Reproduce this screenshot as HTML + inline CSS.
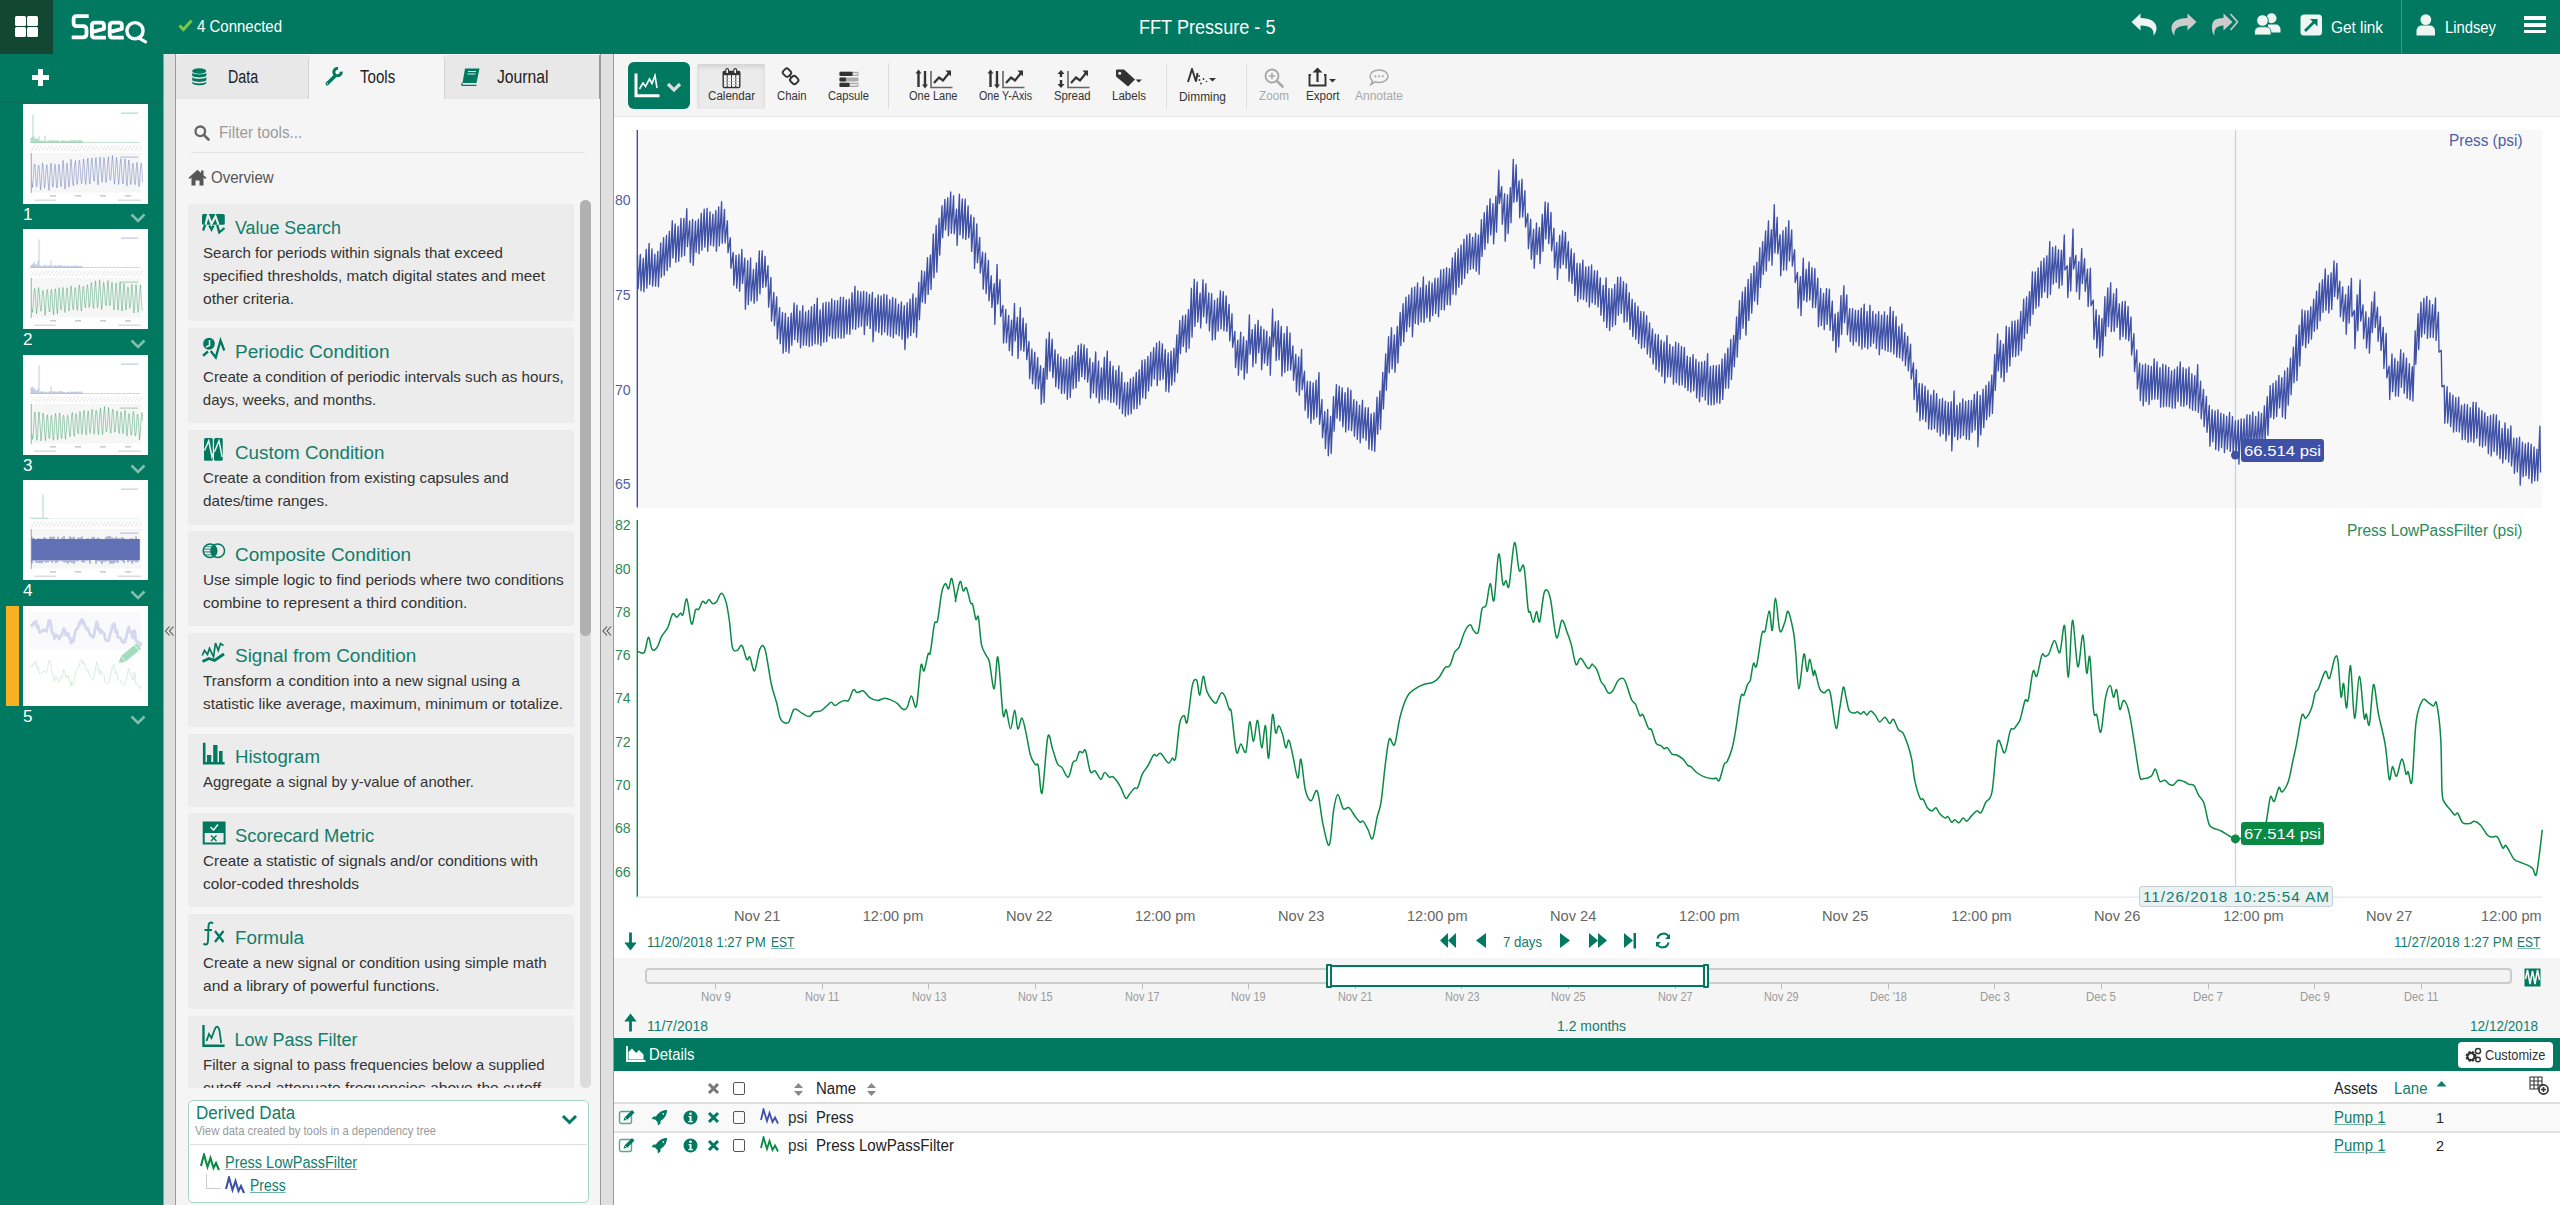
<!DOCTYPE html>
<html><head><meta charset="utf-8">
<style>
*{box-sizing:border-box;margin:0;padding:0}
html,body{width:2560px;height:1205px;overflow:hidden;background:#fff;font-family:"Liberation Sans",sans-serif;color:#333}
.a{position:absolute}
.t{position:absolute;white-space:pre;line-height:1}
</style></head><body>
<div class="a" style="left:0;top:0;width:2560px;height:54px;background:#007960"></div>
<div class="a" style="left:0;top:0;width:53px;height:53.5px;background:#124833"></div>
<div class="a" style="left:15px;top:16px;width:11px;height:9.5px;background:#fff;border-radius:1.5px"></div>
<div class="a" style="left:27px;top:16px;width:11px;height:9.5px;background:#fff;border-radius:1.5px"></div>
<div class="a" style="left:15px;top:27px;width:11px;height:9.5px;background:#fff;border-radius:1.5px"></div>
<div class="a" style="left:27px;top:27px;width:11px;height:9.5px;background:#fff;border-radius:1.5px"></div>
<svg class="a" style="left:60px;top:8px" width="100" height="40" viewBox="0 0 100 40">
<g fill="none" stroke="#fff" stroke-width="3.8" stroke-linejoin="round">
<path d="M28.7,8.2 H16.5 Q13.6,8.2 13.6,11.5 V15 Q13.6,18.2 16.8,18.2 H23.2 Q26.5,18.2 26.5,21.8 V25.8 Q26.5,29.4 23,29.4 H11.7" stroke-linejoin="miter"/>
<path d="M45.9,29.6 H34.6 Q31.9,29.6 31.9,26.8 V17.4 Q31.9,14.55 34.8,14.55 H41.3 Q44,14.55 44,17.3 V20.8 L32.5,23.8"/>
<path d="M63.75,29.6 H52.45 Q49.75,29.6 49.75,26.8 V17.4 Q49.75,14.55 52.65,14.55 H59.15 Q61.85,14.55 61.85,17.3 V20.8 L50.35,23.8"/>
</g>
<circle cx="75" cy="22.7" r="8.1" fill="none" stroke="#fff" stroke-width="3.4"/>
<path d="M77.5,16.8 A6,6 0 0 1 77.5,28.6" fill="none" stroke="#fff" stroke-width="0.9" stroke-opacity="0.8"/>
<path d="M78.5,29.8 L85.6,33.8" stroke="#fff" stroke-width="3.2" stroke-linecap="round"/>
</svg>
<svg class="a" style="left:178px;top:19px" width="15" height="13" viewBox="0 0 15 13"><path d="M1.5,6.5 L5.5,10.5 L13.5,1.5" fill="none" stroke="#7ac943" stroke-width="3"/></svg>
<div class="t" style="left:197.0px;top:18.7px;font-size:16px;color:#fff;transform:scaleX(0.9368);transform-origin:0 0;">4 Connected</div>
<div class="t" style="left:1138.8px;top:16.8px;font-size:20px;color:#fff;transform:scaleX(0.9053);transform-origin:0 0;">FFT Pressure - 5</div>
<svg class="a" style="left:2131px;top:13px" width="26" height="23" viewBox="0 0 26 23"><path d="M0.5,9 L9.5,0.5 V5 C19,5 25.5,8.5 25.5,15 C25.5,18.5 24,21 22.5,22.8 C23.5,16 19,12.5 9.5,12.5 V17.5 Z" fill="#eef5f3"/></svg>
<svg class="a" style="left:2171px;top:13px" width="26" height="23" viewBox="0 0 26 23"><g transform="translate(26,0) scale(-1,1)"><path d="M0.5,9 L9.5,0.5 V5 C19,5 25.5,8.5 25.5,15 C25.5,18.5 24,21 22.5,22.8 C23.5,16 19,12.5 9.5,12.5 V17.5 Z" fill="#cccccc"/></g></svg>
<svg class="a" style="left:2212px;top:13px" width="26" height="23" viewBox="0 0 26 23"><g transform="translate(21,0) scale(-1,1)"><path d="M0.5,9 L9.5,0.5 V5 C19,5 21,8.5 21,15 C21,18.5 20,21 18.5,22.8 C19.5,16 16,12.5 9.5,12.5 V17.5 Z" fill="#cccccc"/></g><path d="M18.5,1 L25.5,9 L18.5,17" fill="none" stroke="#cccccc" stroke-width="1.6"/></svg>
<svg class="a" style="left:2254px;top:13px" width="27" height="23" viewBox="0 0 27 23"><circle cx="17.5" cy="5.3" r="5" fill="#eef5f3"/><path d="M14,11.5 H22 C24.5,11.5 26.5,13.5 26.5,16.5 V19.5 H14 Z" fill="#eef5f3"/><circle cx="8.5" cy="7.5" r="5.8" stroke="#007960" stroke-width="1" fill="#eef5f3"/><path d="M0.5,22 V19 C0.5,15.5 3,13.8 6,13.8 H11.5 C14.5,13.8 17,15.5 17,19 V22 Z" fill="#eef5f3" stroke="#007960" stroke-width="0.8"/></svg>
<svg class="a" style="left:2300px;top:14px" width="23" height="22" viewBox="0 0 23 22"><rect x="0.5" y="0.5" width="21.5" height="21" rx="3.5" fill="#eef5f3"/><path d="M5,17 L15.5,6.5" stroke="#007960" stroke-width="2.6"/><path d="M10,5 H17.5 V12.5 Z" fill="#007960"/></svg>
<div class="t" style="left:2331.0px;top:20.0px;font-size:16px;color:#fff;transform:scaleX(0.9585);transform-origin:0 0;">Get link</div>
<div class="a" style="left:2401px;top:0;width:1px;height:54px;background:#3e9683"></div>
<svg class="a" style="left:2416px;top:14px" width="20" height="22" viewBox="0 0 20 22"><circle cx="9.8" cy="5.6" r="5.4" fill="#eef5f3"/><path d="M0.5,21.5 V17 C0.5,13.5 3,11.5 6,11.5 H13.5 C16.5,11.5 19,13.5 19,17 V21.5 Z" fill="#eef5f3"/></svg>
<div class="t" style="left:2445.0px;top:20.0px;font-size:16px;color:#fff;transform:scaleX(0.9246);transform-origin:0 0;">Lindsey</div>
<div class="a" style="left:2523.5px;top:16px;width:22px;height:3.7px;background:#fff"></div>
<div class="a" style="left:2523.5px;top:23px;width:22px;height:3.7px;background:#fff"></div>
<div class="a" style="left:2523.5px;top:29.8px;width:22px;height:3.7px;background:#fff"></div>
<div class="a" style="left:0;top:54px;width:163px;height:1151px;background:#007960"></div>
<div class="a" style="left:32px;top:75px;width:17px;height:4.5px;background:#fff"></div>
<div class="a" style="left:38.2px;top:69px;width:4.5px;height:17px;background:#fff"></div>
<div class="a" style="left:0;top:101.5px;width:163px;height:1px;background:#0a6b56"></div>
<svg class="a" style="left:23px;top:103.6px" width="125" height="100" viewBox="0 0 125 100"><rect width="125" height="100" fill="#fff"/><line x1="7" y1="38.5" x2="117" y2="38.5" stroke="#0a8a45" stroke-opacity="0.3" stroke-width="0.8"/><path d="M8,38.5 V33.8 M9,38.5 V33.5 M10,38.5 V10.5 M11,38.5 V32.3 M12,38.5 V35.3 M13,38.5 V34.1 M14,38.5 V34.1 M15,38.5 V35.7 M16,38.5 V32.2 M17,38.5 V36.7 M18,38.5 V36.4 M19,38.5 V36.5 M20,38.5 V37.4 M21,38.5 V36.4 M22,38.5 V31.5 M23,38.5 V37.0 M24,38.5 V37.5 M25,38.5 V36.2 M26,38.5 V36.8 M27,38.5 V36.4 M28,38.5 V36.2 M29,38.5 V36.4 M30,38.5 V36.1 M31,38.5 V36.9 M32,38.5 V36.3 M33,38.5 V36.8 M34,38.5 V36.1 M35,38.5 V36.2 M36,38.5 V37.4 M37,38.5 V37.3 M38,38.5 V37.2 M39,38.5 V36.1 M40,38.5 V36.8 M41,38.5 V36.6 M42,38.5 V37.0 M43,38.5 V36.7 M44,38.5 V36.9 M45,38.5 V37.0 M46,38.5 V36.6 M47,38.5 V36.6 M48,38.5 V36.1 M49,38.5 V36.5 M50,38.5 V36.1 M51,38.5 V36.2 M52,38.5 V36.0 M53,38.5 V36.5 M54,38.5 V37.3 M55,38.5 V36.2 M56,38.5 V36.1 M57,38.5 V36.1 M58,38.5 V36.6 M59,38.5 V36.4" stroke="#0a8a45" stroke-opacity="0.55" stroke-width="0.6"/><rect x="98" y="8.5" width="17" height="1.3" fill="#0a8a45" fill-opacity="0.3"/><path d="M8.0,47 L12.0,41.5 M11.7,47 L15.7,41.5 M15.4,47 L19.4,41.5 M19.1,47 L23.1,41.5 M22.8,47 L26.8,41.5 M26.5,47 L30.5,41.5 M30.2,47 L34.2,41.5 M33.9,47 L37.9,41.5 M37.6,47 L41.6,41.5 M41.3,47 L45.3,41.5 M45.0,47 L49.0,41.5 M48.7,47 L52.7,41.5 M52.4,47 L56.4,41.5 M56.1,47 L60.1,41.5 M59.8,47 L63.8,41.5 M63.5,47 L67.5,41.5 M67.2,47 L71.2,41.5 M70.9,47 L74.9,41.5 M74.6,47 L78.6,41.5 M78.3,47 L82.3,41.5 M82.0,47 L86.0,41.5 M85.7,47 L89.7,41.5 M89.4,47 L93.4,41.5 M93.1,47 L97.1,41.5 M96.8,47 L100.8,41.5 M100.5,47 L104.5,41.5 M104.2,47 L108.2,41.5 M107.9,47 L111.9,41.5 M111.6,47 L115.6,41.5 M115.3,47 L119.3,41.5" stroke="#c8c8c8" stroke-width="0.5"/><rect x="7" y="49" width="111" height="39.5" fill="#f6f6f6"/><line x1="8.3" y1="49" x2="8.3" y2="89" stroke="#3f51a6" stroke-opacity="0.6" stroke-width="0.8"/><path d="M9.0,78.8 9.5,83.5 10.0,77.6 10.5,71.7 11.0,62.0 11.5,60.3 12.0,60.2 12.5,70.0 13.0,77.8 13.5,82.8 14.0,81.9 14.5,72.4 15.0,64.5 15.5,61.3 16.0,61.7 16.5,68.5 17.0,77.7 17.5,85.8 18.0,82.1 18.5,75.2 19.0,65.5 19.5,58.9 20.0,61.0 20.5,67.5 21.0,77.9 21.5,84.1 22.0,80.7 22.5,77.0 23.0,67.0 23.5,62.4 24.0,60.7 24.5,68.1 25.0,76.3 25.5,81.3 26.0,86.3 26.5,78.1 27.0,69.5 27.5,62.6 28.0,59.1 28.5,64.9 29.0,73.4 29.5,82.4 30.0,83.0 30.5,79.5 31.0,71.1 31.5,64.4 32.0,60.2 32.5,64.4 33.0,72.6 33.5,82.3 34.0,84.0 34.5,78.8 35.0,70.6 35.5,61.5 36.0,60.2 36.5,63.2 37.0,71.5 37.5,79.9 38.0,82.7 38.5,80.2 39.0,70.8 39.5,64.3 40.0,56.4 40.5,59.9 41.0,71.2 41.5,79.2 42.0,85.0 42.5,79.7 43.0,71.6 43.5,63.9 44.0,59.1 44.5,63.6 45.0,72.1 45.5,82.4 46.0,83.1 46.5,80.1 47.0,70.2 47.5,61.5 48.0,55.3 48.5,60.7 49.0,67.8 49.5,77.4 50.0,80.4 50.5,82.0 51.0,72.5 51.5,61.2 52.0,59.3 52.5,56.6 53.0,65.2 53.5,73.9 54.0,80.5 54.5,78.3 55.0,74.5 55.5,65.5 56.0,56.7 56.5,56.1 57.0,60.8 57.5,69.3 58.0,76.4 58.5,79.7 59.0,77.8 59.5,70.4 60.0,62.3 60.5,55.0 61.0,58.1 61.5,65.1 62.0,74.0 62.5,80.6 63.0,79.2 63.5,70.5 64.0,62.3 64.5,56.2 65.0,54.0 65.5,63.7 66.0,72.7 66.5,77.9 67.0,80.1 67.5,72.4 68.0,61.3 68.5,55.3 69.0,53.9 69.5,60.8 70.0,67.6 70.5,75.1 71.0,77.3 71.5,77.0 72.0,66.9 72.5,55.8 73.0,53.4 73.5,60.1 74.0,68.3 74.5,75.0 75.0,80.8 75.5,73.6 76.0,66.1 76.5,59.0 77.0,53.0 77.5,56.9 78.0,64.4 78.5,72.1 79.0,78.3 79.5,75.5 80.0,67.1 80.5,57.1 81.0,53.5 81.5,56.4 82.0,64.5 82.5,75.1 83.0,78.6 83.5,77.3 84.0,69.2 84.5,60.5 85.0,55.5 85.5,52.6 86.0,60.7 86.5,71.3 87.0,76.2 87.5,76.1 88.0,73.3 88.5,65.2 89.0,56.6 89.5,51.5 90.0,56.9 90.5,66.6 91.0,75.5 91.5,80.2 92.0,74.5 92.5,66.0 93.0,59.2 93.5,53.3 94.0,57.1 94.5,66.6 95.0,74.0 95.5,80.6 96.0,78.8 96.5,70.1 97.0,60.3 97.5,57.4 98.0,54.7 98.5,63.6 99.0,71.7 99.5,77.9 100.0,80.0 100.5,74.3 101.0,64.9 101.5,59.3 102.0,54.9 102.5,59.8 103.0,70.8 103.5,78.8 104.0,82.0 104.5,75.6 105.0,66.4 105.5,56.9 106.0,55.9 106.5,63.3 107.0,71.9 107.5,80.6 108.0,79.8 108.5,76.9 109.0,66.8 109.5,60.3 110.0,59.1 110.5,62.2 111.0,72.5 111.5,79.8 112.0,80.8 112.5,78.8 113.0,68.6 113.5,61.4 114.0,58.4 114.5,63.8 115.0,71.9 115.5,79.4 116.0,82.5 116.5,80.3 117.0,72.0 117.5,64.5 118.0,60.4 118.5,59.2 119.0,67.8 119.5,78.2" fill="none" stroke="#3f51a6" stroke-opacity="0.55" stroke-width="0.7"/><rect x="97" y="52.5" width="18" height="1.3" fill="#3f51a6" fill-opacity="0.3"/><rect x="27" y="91" width="6" height="1.6" fill="#ccc"/><rect x="52" y="91" width="6" height="1.6" fill="#ccc"/><rect x="77" y="91" width="6" height="1.6" fill="#ccc"/><rect x="102" y="91" width="6" height="1.6" fill="#ccc"/><rect x="11" y="95.5" width="22" height="1.5" fill="#ddd"/><rect x="95" y="95.5" width="23" height="1.5" fill="#ddd"/></svg>
<div class="t" style="left:23.0px;top:206.6px;font-size:16px;color:#fff;transform:scaleX(1.0667);transform-origin:0 0;">1</div>
<svg class="a" style="left:130px;top:213.1px" width="16" height="10" viewBox="0 0 16 10"><path d="M1.5,1.5 L8,8 L14.5,1.5" fill="none" stroke="#7fbfae" stroke-width="2.6"/></svg>
<svg class="a" style="left:23px;top:229.15px" width="125" height="100" viewBox="0 0 125 100"><rect width="125" height="100" fill="#fff"/><line x1="7" y1="38.5" x2="117" y2="38.5" stroke="#3f51a6" stroke-opacity="0.3" stroke-width="0.8"/><path d="M8,38.5 V36.0 M9,38.5 V35.7 M10,38.5 V34.5 M11,38.5 V32.5 M12,38.5 V35.4 M13,38.5 V35.1 M14,38.5 V36.0 M15,38.5 V31.9 M16,38.5 V10.5 M17,38.5 V36.3 M18,38.5 V37.2 M19,38.5 V37.0 M20,38.5 V36.6 M21,38.5 V36.4 M22,38.5 V36.2 M23,38.5 V36.2 M24,38.5 V37.4 M25,38.5 V36.6 M26,38.5 V36.5 M27,38.5 V36.7 M28,38.5 V31.5 M29,38.5 V36.8 M30,38.5 V37.4 M31,38.5 V36.1 M32,38.5 V36.2 M33,38.5 V36.7 M34,38.5 V37.0 M35,38.5 V36.1 M36,38.5 V36.6 M37,38.5 V36.2 M38,38.5 V36.2 M39,38.5 V36.7 M40,38.5 V36.9 M41,38.5 V36.6 M42,38.5 V36.9 M43,38.5 V37.3 M44,38.5 V37.0 M45,38.5 V36.3 M46,38.5 V37.4 M47,38.5 V37.4 M48,38.5 V36.6 M49,38.5 V37.1 M50,38.5 V36.7 M51,38.5 V36.8 M52,38.5 V37.0 M53,38.5 V36.0 M54,38.5 V37.2 M55,38.5 V36.9 M56,38.5 V37.2 M57,38.5 V36.6 M58,38.5 V37.1 M59,38.5 V37.0" stroke="#3f51a6" stroke-opacity="0.55" stroke-width="0.6"/><rect x="98" y="8.5" width="17" height="1.3" fill="#3f51a6" fill-opacity="0.3"/><path d="M8.0,47 L12.0,41.5 M11.7,47 L15.7,41.5 M15.4,47 L19.4,41.5 M19.1,47 L23.1,41.5 M22.8,47 L26.8,41.5 M26.5,47 L30.5,41.5 M30.2,47 L34.2,41.5 M33.9,47 L37.9,41.5 M37.6,47 L41.6,41.5 M41.3,47 L45.3,41.5 M45.0,47 L49.0,41.5 M48.7,47 L52.7,41.5 M52.4,47 L56.4,41.5 M56.1,47 L60.1,41.5 M59.8,47 L63.8,41.5 M63.5,47 L67.5,41.5 M67.2,47 L71.2,41.5 M70.9,47 L74.9,41.5 M74.6,47 L78.6,41.5 M78.3,47 L82.3,41.5 M82.0,47 L86.0,41.5 M85.7,47 L89.7,41.5 M89.4,47 L93.4,41.5 M93.1,47 L97.1,41.5 M96.8,47 L100.8,41.5 M100.5,47 L104.5,41.5 M104.2,47 L108.2,41.5 M107.9,47 L111.9,41.5 M111.6,47 L115.6,41.5 M115.3,47 L119.3,41.5" stroke="#c8c8c8" stroke-width="0.5"/><rect x="7" y="49" width="111" height="39.5" fill="#f6f6f6"/><line x1="8.3" y1="49" x2="8.3" y2="89" stroke="#0a8a45" stroke-opacity="0.6" stroke-width="0.8"/><path d="M9.0,79.6 9.5,83.4 10.0,78.8 10.5,71.5 11.0,63.0 11.5,59.6 12.0,59.7 12.5,67.2 13.0,78.5 13.5,84.9 14.0,81.3 14.5,75.8 15.0,64.8 15.5,58.4 16.0,61.2 16.5,66.6 17.0,75.2 17.5,79.5 18.0,82.3 18.5,79.1 19.0,69.6 19.5,62.2 20.0,61.5 20.5,64.2 21.0,70.7 21.5,78.9 22.0,86.2 22.5,82.8 23.0,73.8 23.5,65.5 24.0,60.7 24.5,60.6 25.0,66.6 25.5,75.4 26.0,81.4 26.5,83.0 27.0,82.0 27.5,71.0 28.0,61.4 28.5,60.4 29.0,65.9 29.5,75.9 30.0,80.7 30.5,85.7 31.0,79.7 31.5,68.3 32.0,60.0 32.5,59.9 33.0,65.2 33.5,76.8 34.0,81.5 34.5,84.9 35.0,74.2 35.5,65.4 36.0,58.8 36.5,62.1 37.0,68.5 37.5,78.0 38.0,81.1 38.5,79.5 39.0,72.5 39.5,61.9 40.0,58.4 40.5,63.6 41.0,72.3 41.5,81.5 42.0,83.5 42.5,78.3 43.0,70.5 43.5,62.2 44.0,58.8 44.5,60.2 45.0,68.8 45.5,76.8 46.0,82.1 46.5,79.5 47.0,71.0 47.5,64.0 48.0,56.9 48.5,59.8 49.0,68.4 49.5,76.8 50.0,80.5 50.5,80.8 51.0,72.6 51.5,62.9 52.0,59.1 52.5,58.6 53.0,64.5 53.5,72.9 54.0,80.6 54.5,81.5 55.0,73.7 55.5,65.4 56.0,56.2 56.5,56.1 57.0,62.1 57.5,71.9 58.0,80.2 58.5,82.1 59.0,75.2 59.5,65.3 60.0,57.6 60.5,57.2 61.0,61.8 61.5,70.6 62.0,77.9 62.5,78.8 63.0,72.8 63.5,65.2 64.0,57.1 64.5,55.7 65.0,60.3 65.5,68.4 66.0,78.5 66.5,77.5 67.0,74.0 67.5,63.6 68.0,55.1 68.5,53.5 69.0,58.4 69.5,67.6 70.0,77.2 70.5,79.4 71.0,75.6 71.5,66.6 72.0,56.3 72.5,51.8 73.0,58.6 73.5,66.8 74.0,73.0 74.5,78.9 75.0,76.0 75.5,66.9 76.0,59.9 76.5,51.2 77.0,55.0 77.5,63.9 78.0,71.6 78.5,80.4 79.0,78.3 79.5,70.0 80.0,61.3 80.5,53.4 81.0,54.4 81.5,61.9 82.0,69.3 82.5,74.7 83.0,76.6 83.5,76.0 84.0,64.9 84.5,55.5 85.0,51.6 85.5,58.2 86.0,68.8 86.5,76.7 87.0,76.7 87.5,74.0 88.0,64.3 88.5,57.3 89.0,53.3 89.5,59.6 90.0,66.9 90.5,75.7 91.0,81.1 91.5,75.2 92.0,69.7 92.5,60.2 93.0,54.0 93.5,54.8 94.0,64.8 94.5,75.0 95.0,81.2 95.5,78.3 96.0,69.6 96.5,60.6 97.0,53.1 97.5,59.2 98.0,66.5 98.5,75.4 99.0,82.0 99.5,76.7 100.0,68.1 100.5,57.7 101.0,54.5 101.5,60.1 102.0,68.0 102.5,77.5 103.0,81.1 103.5,77.3 104.0,69.3 104.5,58.8 105.0,58.1 105.5,59.0 106.0,69.7 106.5,79.0 107.0,79.0 107.5,75.5 108.0,68.6 108.5,58.2 109.0,55.3 109.5,61.3 110.0,69.5 110.5,80.5 111.0,84.0 111.5,79.2 112.0,70.2 112.5,63.5 113.0,55.7 113.5,61.8 114.0,70.0 114.5,79.5 115.0,83.3 115.5,81.5 116.0,74.5 116.5,65.9 117.0,59.1 117.5,55.9 118.0,63.7 118.5,71.7 119.0,81.5 119.5,81.6" fill="none" stroke="#0a8a45" stroke-opacity="0.55" stroke-width="0.7"/><rect x="97" y="52.5" width="18" height="1.3" fill="#0a8a45" fill-opacity="0.3"/><rect x="27" y="91" width="6" height="1.6" fill="#ccc"/><rect x="52" y="91" width="6" height="1.6" fill="#ccc"/><rect x="77" y="91" width="6" height="1.6" fill="#ccc"/><rect x="102" y="91" width="6" height="1.6" fill="#ccc"/><rect x="11" y="95.5" width="22" height="1.5" fill="#ddd"/><rect x="95" y="95.5" width="23" height="1.5" fill="#ddd"/></svg>
<div class="t" style="left:23.0px;top:332.1px;font-size:16px;color:#fff;transform:scaleX(1.0667);transform-origin:0 0;">2</div>
<svg class="a" style="left:130px;top:338.65px" width="16" height="10" viewBox="0 0 16 10"><path d="M1.5,1.5 L8,8 L14.5,1.5" fill="none" stroke="#7fbfae" stroke-width="2.6"/></svg>
<svg class="a" style="left:23px;top:354.7px" width="125" height="100" viewBox="0 0 125 100"><rect width="125" height="100" fill="#fff"/><line x1="7" y1="38.5" x2="117" y2="38.5" stroke="#3f51a6" stroke-opacity="0.3" stroke-width="0.8"/><path d="M8,38.5 V32.8 M9,38.5 V31.8 M10,38.5 V31.9 M11,38.5 V34.2 M12,38.5 V33.3 M13,38.5 V35.9 M14,38.5 V35.3 M15,38.5 V33.6 M16,38.5 V10.5 M17,38.5 V37.1 M18,38.5 V36.1 M19,38.5 V36.4 M20,38.5 V37.3 M21,38.5 V36.3 M22,38.5 V37.3 M23,38.5 V36.6 M24,38.5 V37.3 M25,38.5 V37.5 M26,38.5 V36.2 M27,38.5 V37.2 M28,38.5 V31.5 M29,38.5 V36.0 M30,38.5 V36.2 M31,38.5 V37.1 M32,38.5 V36.1 M33,38.5 V36.7 M34,38.5 V36.5 M35,38.5 V37.2 M36,38.5 V36.1 M37,38.5 V36.5 M38,38.5 V36.1 M39,38.5 V36.2 M40,38.5 V37.1 M41,38.5 V37.0 M42,38.5 V37.3 M43,38.5 V37.3 M44,38.5 V37.4 M45,38.5 V37.0 M46,38.5 V36.6 M47,38.5 V37.5 M48,38.5 V36.5 M49,38.5 V37.0 M50,38.5 V37.0 M51,38.5 V36.3 M52,38.5 V36.8 M53,38.5 V37.0 M54,38.5 V36.8 M55,38.5 V36.4 M56,38.5 V37.4 M57,38.5 V36.0 M58,38.5 V37.5 M59,38.5 V36.4" stroke="#3f51a6" stroke-opacity="0.55" stroke-width="0.6"/><rect x="98" y="8.5" width="17" height="1.3" fill="#3f51a6" fill-opacity="0.3"/><path d="M8.0,47 L12.0,41.5 M11.7,47 L15.7,41.5 M15.4,47 L19.4,41.5 M19.1,47 L23.1,41.5 M22.8,47 L26.8,41.5 M26.5,47 L30.5,41.5 M30.2,47 L34.2,41.5 M33.9,47 L37.9,41.5 M37.6,47 L41.6,41.5 M41.3,47 L45.3,41.5 M45.0,47 L49.0,41.5 M48.7,47 L52.7,41.5 M52.4,47 L56.4,41.5 M56.1,47 L60.1,41.5 M59.8,47 L63.8,41.5 M63.5,47 L67.5,41.5 M67.2,47 L71.2,41.5 M70.9,47 L74.9,41.5 M74.6,47 L78.6,41.5 M78.3,47 L82.3,41.5 M82.0,47 L86.0,41.5 M85.7,47 L89.7,41.5 M89.4,47 L93.4,41.5 M93.1,47 L97.1,41.5 M96.8,47 L100.8,41.5 M100.5,47 L104.5,41.5 M104.2,47 L108.2,41.5 M107.9,47 L111.9,41.5 M111.6,47 L115.6,41.5 M115.3,47 L119.3,41.5" stroke="#c8c8c8" stroke-width="0.5"/><rect x="7" y="49" width="111" height="39.5" fill="#f6f6f6"/><line x1="8.3" y1="49" x2="8.3" y2="89" stroke="#0a8a45" stroke-opacity="0.6" stroke-width="0.8"/><path d="M9.0,79.2 9.5,84.3 10.0,82.1 10.5,74.8 11.0,66.6 11.5,58.3 12.0,57.0 12.5,65.6 13.0,73.8 13.5,82.9 14.0,85.4 14.5,81.6 15.0,71.2 15.5,61.5 16.0,56.8 16.5,62.4 17.0,69.0 17.5,77.4 18.0,85.9 18.5,80.3 19.0,74.9 19.5,66.0 20.0,58.2 20.5,60.6 21.0,64.5 21.5,75.7 22.0,81.6 22.5,85.7 23.0,79.0 23.5,70.1 24.0,61.1 24.5,59.9 25.0,65.0 25.5,75.0 26.0,83.6 26.5,83.3 27.0,78.5 27.5,68.7 28.0,61.0 28.5,60.3 29.0,65.1 29.5,73.2 30.0,83.0 30.5,85.2 31.0,80.7 31.5,71.5 32.0,62.5 32.5,58.4 33.0,61.6 33.5,70.3 34.0,78.9 34.5,84.7 35.0,83.4 35.5,75.1 36.0,64.5 36.5,57.9 37.0,59.6 37.5,69.8 38.0,80.4 38.5,83.6 39.0,82.6 39.5,72.7 40.0,62.4 40.5,60.2 41.0,61.7 41.5,70.8 42.0,80.7 42.5,84.3 43.0,79.5 43.5,73.9 44.0,63.6 44.5,60.6 45.0,60.2 45.5,65.8 46.0,73.0 46.5,78.8 47.0,81.7 47.5,77.7 48.0,69.7 48.5,61.8 49.0,57.9 49.5,57.8 50.0,67.6 50.5,75.2 51.0,80.9 51.5,81.3 52.0,70.5 52.5,61.3 53.0,58.5 53.5,59.4 54.0,68.0 54.5,77.2 55.0,78.7 55.5,78.5 56.0,69.4 56.5,59.6 57.0,56.5 57.5,59.3 58.0,67.8 58.5,78.1 59.0,79.3 59.5,76.6 60.0,66.5 60.5,58.6 61.0,55.3 61.5,57.6 62.0,67.0 62.5,75.6 63.0,79.7 63.5,79.6 64.0,70.3 64.5,61.0 65.0,55.8 65.5,57.0 66.0,65.4 66.5,73.8 67.0,78.3 67.5,76.3 68.0,69.1 68.5,59.7 69.0,54.2 69.5,56.6 70.0,63.1 70.5,71.6 71.0,79.2 71.5,78.2 72.0,71.4 72.5,61.4 73.0,55.2 73.5,55.9 74.0,58.6 74.5,69.6 75.0,76.1 75.5,79.6 76.0,71.7 76.5,63.4 77.0,57.0 77.5,53.3 78.0,59.3 78.5,67.8 79.0,75.4 79.5,79.6 80.0,75.3 80.5,64.2 81.0,56.8 81.5,51.6 82.0,59.7 82.5,66.8 83.0,75.4 83.5,76.9 84.0,73.9 84.5,68.5 85.0,60.5 85.5,52.6 86.0,57.5 86.5,64.3 87.0,74.3 87.5,77.9 88.0,78.3 88.5,70.5 89.0,60.0 89.5,54.4 90.0,54.3 90.5,60.0 91.0,68.8 91.5,76.8 92.0,77.2 92.5,74.5 93.0,66.2 93.5,59.0 94.0,55.8 94.5,58.8 95.0,66.1 95.5,74.8 96.0,77.9 96.5,78.4 97.0,68.4 97.5,58.4 98.0,56.8 98.5,58.4 99.0,66.4 99.5,74.7 100.0,78.5 100.5,77.7 101.0,67.8 101.5,59.0 102.0,55.3 102.5,59.3 103.0,66.9 103.5,75.1 104.0,80.9 104.5,76.1 105.0,69.4 105.5,60.9 106.0,58.5 106.5,59.8 107.0,67.2 107.5,74.8 108.0,80.0 108.5,79.9 109.0,75.7 109.5,66.6 110.0,57.1 110.5,56.5 111.0,60.3 111.5,70.1 112.0,79.9 112.5,80.8 113.0,78.0 113.5,71.7 114.0,62.1 114.5,59.1 115.0,60.9 115.5,66.6 116.0,76.1 116.5,84.8 117.0,80.6 117.5,73.6 118.0,64.7 118.5,61.2 119.0,57.4 119.5,65.8" fill="none" stroke="#0a8a45" stroke-opacity="0.55" stroke-width="0.7"/><rect x="97" y="52.5" width="18" height="1.3" fill="#0a8a45" fill-opacity="0.3"/><rect x="27" y="91" width="6" height="1.6" fill="#ccc"/><rect x="52" y="91" width="6" height="1.6" fill="#ccc"/><rect x="77" y="91" width="6" height="1.6" fill="#ccc"/><rect x="102" y="91" width="6" height="1.6" fill="#ccc"/><rect x="11" y="95.5" width="22" height="1.5" fill="#ddd"/><rect x="95" y="95.5" width="23" height="1.5" fill="#ddd"/></svg>
<div class="t" style="left:23.0px;top:457.7px;font-size:16px;color:#fff;transform:scaleX(1.0667);transform-origin:0 0;">3</div>
<svg class="a" style="left:130px;top:464.2px" width="16" height="10" viewBox="0 0 16 10"><path d="M1.5,1.5 L8,8 L14.5,1.5" fill="none" stroke="#7fbfae" stroke-width="2.6"/></svg>
<svg class="a" style="left:23px;top:480.25px" width="125" height="100" viewBox="0 0 125 100"><rect width="125" height="100" fill="#fff"/><line x1="7" y1="38.5" x2="117" y2="38.5" stroke="#0a8a45" stroke-opacity="0.12" stroke-width="0.8"/><path d="M8,38.5 V37.7 M9,38.5 V37.7 M10,38.5 V37.7 M11,38.5 V37.7 M12,38.5 V37.7 M13,38.5 V37.7 M14,38.5 V37.7 M15,38.5 V37.7 M16,38.5 V37.7 M17,38.5 V37.7 M18,38.5 V37.7 M19,38.5 V37.7 M20,38.5 V14.5 M21,38.5 V37.7 M22,38.5 V37.7 M23,38.5 V37.7 M24,38.5 V37.7 M25,38.5 V37.7" stroke="#0a8a45" stroke-opacity="0.55" stroke-width="0.6"/><rect x="98" y="8.5" width="17" height="1.3" fill="#0a8a45" fill-opacity="0.3"/><path d="M8.0,47 L12.0,41.5 M11.7,47 L15.7,41.5 M15.4,47 L19.4,41.5 M19.1,47 L23.1,41.5 M22.8,47 L26.8,41.5 M26.5,47 L30.5,41.5 M30.2,47 L34.2,41.5 M33.9,47 L37.9,41.5 M37.6,47 L41.6,41.5 M41.3,47 L45.3,41.5 M45.0,47 L49.0,41.5 M48.7,47 L52.7,41.5 M52.4,47 L56.4,41.5 M56.1,47 L60.1,41.5 M59.8,47 L63.8,41.5 M63.5,47 L67.5,41.5 M67.2,47 L71.2,41.5 M70.9,47 L74.9,41.5 M74.6,47 L78.6,41.5 M78.3,47 L82.3,41.5 M82.0,47 L86.0,41.5 M85.7,47 L89.7,41.5 M89.4,47 L93.4,41.5 M93.1,47 L97.1,41.5 M96.8,47 L100.8,41.5 M100.5,47 L104.5,41.5 M104.2,47 L108.2,41.5 M107.9,47 L111.9,41.5 M111.6,47 L115.6,41.5 M115.3,47 L119.3,41.5" stroke="#c8c8c8" stroke-width="0.5"/><rect x="7" y="49" width="111" height="39.5" fill="#f6f6f6"/><line x1="8.3" y1="49" x2="8.3" y2="89" stroke="#3f51a6" stroke-opacity="0.6" stroke-width="0.8"/><rect x="9" y="59" width="108" height="21" fill="#3f51a6" fill-opacity="0.68"/><path d="M9,56.8 V83.3 M11,58.1 V81.0 M13,60.0 V82.7 M15,58.1 V83.0 M17,58.5 V83.1 M19,58.9 V83.2 M21,57.1 V81.7 M23,57.8 V82.7 M25,59.2 V82.2 M27,56.8 V81.1 M29,56.8 V82.7 M31,56.6 V81.3 M33,59.6 V83.2 M35,56.8 V81.8 M37,59.6 V80.8 M39,57.5 V81.2 M41,56.2 V82.4 M43,59.2 V82.6 M45,58.6 V83.7 M47,56.4 V82.1 M49,57.4 V82.8 M51,56.8 V83.9 M53,59.9 V81.4 M55,57.6 V81.2 M57,57.6 V80.4 M59,56.5 V82.1 M61,59.5 V82.7 M63,58.8 V80.8 M65,58.1 V80.6 M67,59.2 V83.5 M69,57.2 V80.1 M71,56.9 V80.1 M73,58.7 V83.6 M75,57.5 V81.2 M77,58.5 V81.6 M79,59.5 V84.0 M81,59.8 V81.7 M83,57.0 V81.6 M85,56.1 V81.0 M87,56.1 V83.6 M89,57.3 V83.6 M91,58.2 V83.3 M93,56.8 V82.1 M95,58.1 V82.8 M97,58.4 V80.3 M99,57.0 V81.1 M101,58.0 V83.1 M103,59.3 V80.1 M105,59.5 V82.4 M107,58.6 V81.0 M109,58.2 V83.7 M111,59.0 V81.6 M113,56.5 V82.4 M115,58.9 V81.9" stroke="#3f51a6" stroke-width="0.8"/><rect x="97" y="52.5" width="18" height="1.3" fill="#3f51a6" fill-opacity="0.3"/><rect x="27" y="91" width="6" height="1.6" fill="#ccc"/><rect x="52" y="91" width="6" height="1.6" fill="#ccc"/><rect x="77" y="91" width="6" height="1.6" fill="#ccc"/><rect x="102" y="91" width="6" height="1.6" fill="#ccc"/><rect x="11" y="95.5" width="22" height="1.5" fill="#ddd"/><rect x="95" y="95.5" width="23" height="1.5" fill="#ddd"/></svg>
<div class="t" style="left:23.0px;top:583.2px;font-size:16px;color:#fff;transform:scaleX(1.0667);transform-origin:0 0;">4</div>
<svg class="a" style="left:130px;top:589.75px" width="16" height="10" viewBox="0 0 16 10"><path d="M1.5,1.5 L8,8 L14.5,1.5" fill="none" stroke="#7fbfae" stroke-width="2.6"/></svg>
<svg class="a" style="left:23px;top:605.8px" width="125" height="100" viewBox="0 0 125 100"><rect width="125" height="100" fill="#fff"/><rect x="7" y="6" width="111" height="38" fill="#fafafc"/><path d="M8.0,20.2 8.7,19.1 9.1,20.0 9.8,18.2 10.3,17.3 10.7,17.1 11.1,17.9 11.6,16.6 12.0,16.1 12.4,16.1 12.9,15.2 13.3,17.6 13.8,20.2 14.3,21.0 14.8,22.0 15.4,20.1 16.1,24.8 16.7,26.5 17.5,25.7 18.3,25.6 19.0,25.0 19.4,25.0 20.0,24.6 20.5,23.6 21.1,23.8 21.9,24.6 22.7,24.6 23.4,25.4 23.8,24.2 24.4,21.5 24.8,20.5 25.2,17.9 25.6,15.1 26.0,14.8 26.4,15.7 26.7,14.2 27.0,14.7 27.4,16.2 27.7,17.3 28.2,20.7 28.6,23.6 29.1,25.8 29.6,27.1 30.0,27.1 30.4,27.3 31.0,30.2 31.4,32.7 32.0,28.8 32.5,30.5 33.2,30.0 33.5,29.1 33.9,29.0 34.5,30.7 35.0,30.9 35.5,31.3 36.2,33.1 36.7,32.3 37.2,31.0 37.8,29.4 38.2,29.2 38.9,29.6 39.3,26.6 39.8,26.5 40.3,22.8 40.7,22.5 41.4,24.8 41.7,23.9 42.2,25.4 42.6,29.1 43.2,29.1 43.6,28.2 44.1,28.7 44.5,29.6 44.9,27.4 45.3,27.6 45.6,28.1 46.2,31.4 46.6,32.4 47.3,32.5 48.0,37.2 48.5,32.8 49.1,34.0 49.7,35.2 50.2,35.8 50.7,34.7 51.2,30.3 51.7,28.4 52.5,24.2 53.4,23.2 54.3,22.6 54.9,21.5 55.5,19.9 56.1,18.0 56.6,18.6 57.0,16.2 57.5,15.8 58.0,14.4 58.4,14.5 58.9,13.2 59.5,16.5 59.8,17.8 60.1,17.7 60.7,15.6 61.4,17.6 61.9,19.7 62.5,20.9 63.1,21.4 63.4,21.9 63.8,23.3 64.3,23.8 64.9,22.6 65.4,24.5 65.9,25.9 66.4,27.0 66.9,28.3 67.3,28.8 67.8,29.3 68.4,29.7 68.9,30.4 69.7,31.3 70.3,31.4 70.8,30.2 71.2,28.8 71.7,24.2 72.1,23.1 72.5,21.4 73.0,18.7 73.4,16.7 73.7,15.6 74.3,17.7 74.8,18.6 75.1,23.6 75.6,22.0 75.9,22.4 76.3,23.6 76.7,23.7 77.2,27.0 77.7,23.4 78.0,25.5 78.5,25.6 78.8,25.6 79.2,25.5 79.8,26.5 80.3,26.6 80.8,27.1 81.4,28.5 81.8,31.6 82.3,33.2 82.8,34.2 83.2,34.5 83.7,34.7 84.1,35.0 84.6,34.9 85.1,34.7 85.6,34.4 86.2,32.6 87.0,29.2 87.5,27.1 87.9,26.2 88.3,24.5 88.8,22.5 89.3,20.7 89.8,19.3 90.4,18.0 90.9,17.6 91.5,18.9 91.9,20.8 92.3,25.9 92.8,24.3 93.3,24.3 93.6,25.4 94.2,25.7 94.8,31.2 95.4,31.2 95.9,31.6 96.5,31.9 97.0,31.6 97.6,31.9 98.2,32.9 98.8,35.4 99.4,36.0 100.3,36.7 101.8,36.0 102.3,33.0 102.8,32.2 103.4,31.6 103.8,28.5 104.4,26.1 104.9,23.9 105.5,22.0 106.0,20.9 106.4,24.2 106.7,25.2 107.2,26.1 107.7,26.0 108.0,26.7 108.5,25.7 109.2,31.5 109.6,31.2 110.1,31.0 110.5,31.6 111.1,24.6 111.7,25.1 112.2,27.8 112.4,33.5 113.0,34.6 113.4,35.3 114.1,35.2 114.8,36.3 115.4,36.5 115.9,37.3 116.7,38.7 117.5,39.3 118.0,35.9" fill="none" stroke="#d5d8ee" stroke-width="2.8" stroke-linejoin="round"/><path d="M8.0,61.1 8.7,59.7 9.1,60.8 9.8,58.7 10.3,57.7 10.7,57.5 11.1,58.4 11.6,56.9 12.0,56.4 12.4,56.4 12.9,55.3 13.3,58.1 13.8,61.0 14.3,61.9 14.8,63.1 15.4,60.9 16.1,66.3 16.7,68.3 17.5,67.3 18.3,67.2 19.0,66.5 19.4,66.5 20.0,66.0 20.5,65.0 21.1,65.1 21.9,66.0 22.7,66.0 23.4,66.9 23.8,65.6 24.4,62.6 24.8,61.4 25.2,58.4 25.6,55.3 26.0,54.9 26.4,55.9 26.7,54.2 27.0,54.8 27.4,56.5 27.7,57.7 28.2,61.6 28.6,64.9 29.1,67.4 29.6,68.9 30.0,68.9 30.4,69.1 31.0,72.4 31.4,75.3 32.0,70.9 32.5,72.8 33.2,72.2 33.5,71.2 33.9,71.1 34.5,73.1 35.0,73.2 35.5,73.7 36.2,75.8 36.7,74.8 37.2,73.4 37.8,71.5 38.2,71.3 38.9,71.8 39.3,68.3 39.8,68.2 40.3,64.0 40.7,63.6 41.4,66.3 41.7,65.3 42.2,66.9 42.6,71.2 43.2,71.2 43.6,70.1 44.1,70.8 44.5,71.8 44.9,69.3 45.3,69.5 45.6,70.0 46.2,73.8 46.6,75.0 47.3,75.1 48.0,80.5 48.5,75.4 49.1,76.8 49.7,78.2 50.2,78.9 50.7,77.7 51.2,72.6 51.7,70.5 52.5,65.7 53.4,64.5 54.3,63.8 54.9,62.6 55.5,60.7 56.1,58.5 56.6,59.2 57.0,56.5 57.5,56.0 58.0,54.4 58.4,54.6 58.9,53.0 59.5,56.8 59.8,58.3 60.1,58.2 60.7,55.7 61.4,58.0 61.9,60.5 62.5,61.8 63.1,62.4 63.4,63.0 63.8,64.6 64.3,65.1 64.9,63.8 65.4,66.0 65.9,67.6 66.4,68.8 66.9,70.3 67.3,70.9 67.8,71.4 68.4,71.9 68.9,72.7 69.7,73.7 70.3,73.8 70.8,72.4 71.2,70.9 71.7,65.7 72.1,64.4 72.5,62.4 73.0,59.4 73.4,57.1 73.7,55.8 74.3,58.2 74.8,59.2 75.1,64.9 75.6,63.1 75.9,63.5 76.3,64.9 76.7,65.0 77.2,68.8 77.7,64.7 78.0,67.1 78.5,67.2 78.8,67.2 79.2,67.1 79.8,68.2 80.3,68.3 80.8,69.0 81.4,70.6 81.8,74.1 82.3,75.9 82.8,77.1 83.2,77.4 83.7,77.7 84.1,78.0 84.6,77.8 85.1,77.6 85.6,77.3 86.2,75.2 87.0,71.3 87.5,68.9 87.9,67.9 88.3,66.0 88.8,63.6 89.3,61.6 89.8,60.1 90.4,58.6 90.9,58.0 91.5,59.5 91.9,61.7 92.3,67.5 92.8,65.7 93.3,65.7 93.6,66.9 94.2,67.3 94.8,73.6 95.4,73.6 95.9,74.1 96.5,74.4 97.0,74.0 97.6,74.4 98.2,75.5 98.8,78.4 99.4,79.1 100.3,79.9 101.8,79.1 102.3,75.7 102.8,74.8 103.4,74.1 103.8,70.6 104.4,67.8 104.9,65.3 105.5,63.1 106.0,61.8 106.4,65.7 106.7,66.8 107.2,67.8 107.7,67.7 108.0,68.4 108.5,67.3 109.2,73.9 109.6,73.6 110.1,73.4 110.5,74.1 111.1,66.0 111.7,66.6 112.2,69.8 112.4,76.2 113.0,77.5 113.4,78.3 114.1,78.1 114.8,79.5 115.4,79.7 115.9,80.6 116.7,82.2 117.5,82.9 118.0,79.0" fill="none" stroke="#d3ebdc" stroke-width="0.9"/><g transform="translate(105,49) rotate(50)"><rect x="-3.6" y="-11" width="7.2" height="17" fill="#a3dbbd"/><path d="M-3.6,6.5 L0,12 L3.6,6.5 Z" fill="#a3dbbd"/><rect x="-3.6" y="-14" width="7.2" height="2.4" fill="#a3dbbd"/></g></svg>
<div class="t" style="left:23.0px;top:708.8px;font-size:16px;color:#fff;transform:scaleX(1.0667);transform-origin:0 0;">5</div>
<svg class="a" style="left:130px;top:715.3px" width="16" height="10" viewBox="0 0 16 10"><path d="M1.5,1.5 L8,8 L14.5,1.5" fill="none" stroke="#7fbfae" stroke-width="2.6"/></svg>
<div class="a" style="left:6px;top:606px;width:13px;height:99.5px;background:#f9b122"></div>
<div class="a" style="left:163px;top:54px;width:13px;height:1151px;background:#e0e0e0;border-left:1px solid #9a9a9a;border-right:1px solid #9a9a9a"></div>
<svg class="a" style="left:164px;top:625px" width="11" height="12" viewBox="0 0 11 12"><path d="M5.5,1.5 L1.5,6 L5.5,10.5 M9.5,1.5 L5.5,6 L9.5,10.5" fill="none" stroke="#555" stroke-width="1.1"/></svg>
<div class="a" style="left:176px;top:54px;width:424px;height:1151px;background:#f5f5f5"></div>
<div class="a" style="left:176px;top:55px;width:133px;height:43.5px;background:#e8e8e8;border-top-left-radius:4px"></div>
<div class="a" style="left:445px;top:55px;width:155px;height:43.5px;background:#e8e8e8;border-top-right-radius:3px"></div>
<svg class="a" style="left:192px;top:68px" width="15" height="18" viewBox="0 0 15 18"><ellipse cx="7.2" cy="3" rx="7" ry="2.8" fill="#007960"/><path d="M0.2,4.5 C1,7 13.5,7 14.3,4.5 V7.5 C13.5,10 1,10 0.2,7.5 Z M0.2,9 C1,11.5 13.5,11.5 14.3,9 V12 C13.5,14.5 1,14.5 0.2,12 Z M0.2,13.5 C1,16 13.5,16 14.3,13.5 V15 C13.5,18 1,18 0.2,15 Z" fill="#007960"/></svg>
<div class="t" style="left:227.6px;top:67.5px;font-size:18px;color:#222;transform:scaleX(0.7941);transform-origin:0 0;">Data</div>
<div class="a" style="left:308.2px;top:55.6px;width:137.2px;height:43px;background:#f5f5f5;border-left:1px solid #d2d2d2;border-right:1px solid #d2d2d2;border-top-left-radius:4px;border-top-right-radius:4px"></div>
<svg class="a" style="left:324px;top:67px" width="20" height="20" viewBox="0 0 20 20"><path d="M3.2,16.8 L11,9" stroke="#007960" stroke-width="3.4" stroke-linecap="round"/><path d="M17.2,4.6 A3.7,3.7 0 1 1 14,1.4" fill="none" stroke="#007960" stroke-width="3"/><circle cx="3.4" cy="16.6" r="0.7" fill="#f5f5f5"/></svg>
<div class="t" style="left:360.0px;top:67.5px;font-size:18px;color:#222;transform:scaleX(0.8375);transform-origin:0 0;">Tools</div>
<svg class="a" style="left:461px;top:68px" width="19" height="18" viewBox="0 0 19 18"><path d="M4,0.5 H18.5 L15.5,15 H1.5 Z" fill="#007960"/><path d="M1.5,15 C0.5,15.5 0.5,17.5 2,17.5 H15.5" fill="none" stroke="#007960" stroke-width="1.3"/><path d="M7,3.5 H15 M6.5,6 H14.5" stroke="#e8e8e8" stroke-width="1.2"/></svg>
<div class="t" style="left:496.6px;top:67.5px;font-size:18px;color:#222;transform:scaleX(0.8722);transform-origin:0 0;">Journal</div>
<div class="a" style="left:599px;top:55px;width:1px;height:44px;background:#999"></div>
<svg class="a" style="left:194px;top:125px" width="16" height="16" viewBox="0 0 16 16"><circle cx="6.3" cy="6.3" r="4.8" fill="none" stroke="#666" stroke-width="2.3"/><path d="M9.8,9.8 L14.5,14.5" stroke="#666" stroke-width="2.6" stroke-linecap="round"/></svg>
<div class="t" style="left:219.0px;top:125.0px;font-size:16px;color:#9b9b9b;transform:scaleX(0.9559);transform-origin:0 0;">Filter tools...</div>
<div class="a" style="left:191px;top:152px;width:394px;height:1px;background:#e3e3e3"></div>
<svg class="a" style="left:188px;top:169px" width="19" height="17" viewBox="0 0 19 17"><path d="M9.5,0.8 L0.5,8.8 L1.8,10 L3.5,8.6 V16.5 H7.5 V11.5 H11.5 V16.5 H15.5 V8.6 L17.2,10 L18.5,8.8 L15.5,6.2 V1.5 H13 V4 Z" fill="#555"/></svg>
<div class="t" style="left:211.3px;top:170.2px;font-size:16px;color:#555;transform:scaleX(0.9402);transform-origin:0 0;">Overview</div>
<div class="a" style="left:580px;top:200px;width:11px;height:888px;background:#dcdcdc;border-radius:5.5px"></div>
<div class="a" style="left:580px;top:200px;width:11px;height:436px;background:#b1b1b1;border-radius:5.5px"></div>
<div class="a" style="left:176px;top:199px;width:404px;height:889px;overflow:hidden">
<div class="a" style="left:12px;top:5px;width:386px;height:117px;background:#ececec;border-radius:3.5px"></div>
<svg class="a" style="left:26px;top:15px" width="30" height="30" viewBox="0 0 30 30"><rect x="0" y="0" width="22.75" height="10.75" rx="1.6" fill="#007960"/><path d="M3.5,10.75 L6,0.75 L9.5,10 L13.5,2.25 L16.5,10.75" fill="none" stroke="#ececec" stroke-width="2.2"/><path d="M1,16.5 L3.2,10.75 M7.25,11.5 L9.5,15.5 L11.5,11.5 M15.2,11 L17.25,18.5 L22.5,14" fill="none" stroke="#007960" stroke-width="2.3"/></svg>
<div class="t" style="left:58.5px;top:19.8px;font-size:18px;color:#127d6a;transform:scaleX(0.9931);transform-origin:0 0;">Value Search</div>
<div class="t" style="left:26.8px;top:45.7px;font-size:15px;color:#333;transform:scaleX(1.0078);transform-origin:0 0;">Search for periods within signals that exceed</div>
<div class="t" style="left:26.8px;top:68.6px;font-size:15px;color:#333;transform:scaleX(1.0178);transform-origin:0 0;">specified thresholds, match digital states and meet</div>
<div class="t" style="left:26.8px;top:91.5px;font-size:15px;color:#333;transform:scaleX(1.0394);transform-origin:0 0;">other criteria.</div>
<div class="a" style="left:12px;top:129px;width:386px;height:95px;background:#ececec;border-radius:3.5px"></div>
<svg class="a" style="left:22px;top:133px" width="30" height="30" viewBox="0 0 30 30"><circle cx="11" cy="11.75" r="5.9" fill="#007960"/><path d="M11.5,8 V13.5 L8,15" fill="none" stroke="#ececec" stroke-width="1.6"/><path d="M5,23.75 L10,19.5 M12.75,19 L17.75,25.5 L22.5,8.5 L26.25,18.5" fill="none" stroke="#007960" stroke-width="2.3"/></svg>
<div class="t" style="left:58.5px;top:143.8px;font-size:18px;color:#127d6a;transform:scaleX(1.0575);transform-origin:0 0;">Periodic Condition</div>
<div class="t" style="left:26.8px;top:169.7px;font-size:15px;color:#333;transform:scaleX(1.0108);transform-origin:0 0;">Create a condition of periodic intervals such as hours,</div>
<div class="t" style="left:26.8px;top:192.6px;font-size:15px;color:#333;">days, weeks, and months.</div>
<div class="a" style="left:12px;top:230.5px;width:386px;height:95px;background:#ececec;border-radius:3.5px"></div>
<svg class="a" style="left:28px;top:239px" width="30" height="30" viewBox="0 0 30 30"><rect x="0" y="0" width="8.75" height="22.75" rx="1.5" fill="#007960"/><rect x="10" y="0" width="8.75" height="22.75" rx="1.5" fill="#007960"/><path d="M0.5,12.5 L4.75,2.75 L8,19 L10,13.5 L11,12.5 L15,2.75 L18.2,19" fill="none" stroke="#ececec" stroke-width="1.5"/></svg>
<div class="t" style="left:58.5px;top:245.3px;font-size:18px;color:#127d6a;transform:scaleX(1.0442);transform-origin:0 0;">Custom Condition</div>
<div class="t" style="left:26.8px;top:271.2px;font-size:15px;color:#333;transform:scaleX(1.0069);transform-origin:0 0;">Create a condition from existing capsules and</div>
<div class="t" style="left:26.8px;top:294.1px;font-size:15px;color:#333;transform:scaleX(1.0153);transform-origin:0 0;">dates/time ranges.</div>
<div class="a" style="left:12px;top:332px;width:386px;height:95px;background:#ececec;border-radius:3.5px"></div>
<svg class="a" style="left:22px;top:337px" width="30" height="30" viewBox="0 0 30 30"><circle cx="12" cy="14.75" r="6.8" fill="none" stroke="#007960" stroke-width="1.5"/><circle cx="19.75" cy="14.75" r="6.8" fill="none" stroke="#007960" stroke-width="1.5"/><path d="M15.9,9.2 A6.8,6.8 0 0 1 15.9,20.3 A6.8,6.8 0 0 1 15.9,9.2 Z" fill="#007960"/><path d="M7,10.5 H14 M6,13.2 H13 M6,15.9 H13 M7,18.7 H14" stroke="#007960" stroke-opacity="0.55" stroke-width="1.6"/></svg>
<div class="t" style="left:58.5px;top:346.8px;font-size:18px;color:#127d6a;transform:scaleX(1.0533);transform-origin:0 0;">Composite Condition</div>
<div class="t" style="left:26.8px;top:372.7px;font-size:15px;color:#333;transform:scaleX(1.0255);transform-origin:0 0;">Use simple logic to find periods where two conditions</div>
<div class="t" style="left:26.8px;top:395.6px;font-size:15px;color:#333;transform:scaleX(1.0362);transform-origin:0 0;">combine to represent a third condition.</div>
<div class="a" style="left:12px;top:433.5px;width:386px;height:94.5px;background:#ececec;border-radius:3.5px"></div>
<svg class="a" style="left:22px;top:439px" width="30" height="30" viewBox="0 0 30 30"><path d="M4.25,17.5 L6.5,12.5 L9.5,16.5 L11.5,10.25 L15.5,18.75 L17.5,5 L20.25,12.5 L22.5,5.5 L25.5,7.5" fill="none" stroke="#007960" stroke-width="1.7"/><path d="M4.5,23.5 L11,20.5 L16.5,22.5 L26,16" fill="none" stroke="#007960" stroke-width="2.8"/></svg>
<div class="t" style="left:58.5px;top:448.3px;font-size:18px;color:#127d6a;transform:scaleX(1.0535);transform-origin:0 0;">Signal from Condition</div>
<div class="t" style="left:26.8px;top:474.2px;font-size:15px;color:#333;transform:scaleX(1.0129);transform-origin:0 0;">Transform a condition into a new signal using a</div>
<div class="t" style="left:26.8px;top:497.1px;font-size:15px;color:#333;transform:scaleX(1.0258);transform-origin:0 0;">statistic like average, maximum, minimum or totalize.</div>
<div class="a" style="left:12px;top:534.5px;width:386px;height:73px;background:#ececec;border-radius:3.5px"></div>
<svg class="a" style="left:20px;top:537px" width="30" height="30" viewBox="0 0 30 30"><path d="M8.2,6.7 V27.2 H28.6" fill="none" stroke="#007960" stroke-width="2.6"/><rect x="11" y="19" width="4.3" height="7" fill="#007960"/><rect x="17.2" y="9" width="4.3" height="17" fill="#007960"/><rect x="23" y="15" width="3.6" height="11" fill="#007960"/></svg>
<div class="t" style="left:58.5px;top:549.3px;font-size:18px;color:#127d6a;transform:scaleX(1.0362);transform-origin:0 0;">Histogram</div>
<div class="t" style="left:26.8px;top:575.2px;font-size:15px;color:#333;transform:scaleX(0.9938);transform-origin:0 0;">Aggregate a signal by y-value of another.</div>
<div class="a" style="left:12px;top:613.5px;width:386px;height:94.5px;background:#ececec;border-radius:3.5px"></div>
<svg class="a" style="left:20px;top:616px" width="30" height="30" viewBox="0 0 30 30"><rect x="7.7" y="7.5" width="20.9" height="21" fill="none" stroke="#007960" stroke-width="2"/><rect x="7.7" y="7" width="20.9" height="11" fill="#007960"/><path d="M14.5,12 L17.5,15 L22,9.5" fill="none" stroke="#ececec" stroke-width="1.6"/><path d="M15,20.5 L20.5,26 M20.5,20.5 L15,26" stroke="#007960" stroke-width="1.4"/></svg>
<div class="t" style="left:58.5px;top:628.3px;font-size:18px;color:#127d6a;transform:scaleX(1.0239);transform-origin:0 0;">Scorecard Metric</div>
<div class="t" style="left:26.8px;top:654.2px;font-size:15px;color:#333;transform:scaleX(1.0198);transform-origin:0 0;">Create a statistic of signals and/or conditions with</div>
<div class="t" style="left:26.8px;top:677.1px;font-size:15px;color:#333;transform:scaleX(1.0279);transform-origin:0 0;">color-coded thresholds</div>
<div class="a" style="left:12px;top:715px;width:386px;height:95px;background:#ececec;border-radius:3.5px"></div>
<svg class="a" style="left:20px;top:717px" width="30" height="30" viewBox="0 0 30 30"><path d="M17,7.5 C15,5.5 12.5,6.5 12.5,10 L12,25 C12,28.5 9.5,29.5 7.5,27.5 M8.5,14 H16" fill="none" stroke="#007960" stroke-width="1.9"/><path d="M19,15 L27.5,26 M27.5,15 L19,26" stroke="#007960" stroke-width="2.3"/></svg>
<div class="t" style="left:58.5px;top:729.8px;font-size:18px;color:#127d6a;transform:scaleX(1.0452);transform-origin:0 0;">Formula</div>
<div class="t" style="left:26.8px;top:755.7px;font-size:15px;color:#333;transform:scaleX(1.0125);transform-origin:0 0;">Create a new signal or condition using simple math</div>
<div class="t" style="left:26.8px;top:778.6px;font-size:15px;color:#333;transform:scaleX(1.0360);transform-origin:0 0;">and a library of powerful functions.</div>
<div class="a" style="left:12px;top:817px;width:386px;height:117px;background:#ececec;border-radius:3.5px"></div>
<svg class="a" style="left:20px;top:820px" width="30" height="30" viewBox="0 0 30 30"><path d="M7.5,6 V26.8 H28.6" fill="none" stroke="#007960" stroke-width="2.4"/><path d="M10.5,22 L13,15 L15.5,19 L18.5,11 C20.5,5.5 23,6.5 24,15 L25.2,24" fill="none" stroke="#007960" stroke-width="1.8"/></svg>
<div class="t" style="left:58.5px;top:831.8px;font-size:18px;color:#127d6a;">Low Pass Filter</div>
<div class="t" style="left:26.8px;top:857.7px;font-size:15px;color:#333;transform:scaleX(1.0069);transform-origin:0 0;">Filter a signal to pass frequencies below a supplied</div>
<div class="t" style="left:26.8px;top:880.6px;font-size:15px;color:#333;transform:scaleX(1.0410);transform-origin:0 0;">cutoff and attenuate frequencies above the cutoff</div>
</div>
<div class="a" style="left:188px;top:1100px;width:400.5px;height:102.5px;background:#fff;border:1.5px solid #a8d4c9;border-radius:5px"></div>
<div class="t" style="left:195.5px;top:1104.3px;font-size:18px;color:#127d6a;transform:scaleX(0.9453);transform-origin:0 0;">Derived Data</div>
<div class="t" style="left:195.0px;top:1125.1px;font-size:12px;color:#9a9a9a;transform:scaleX(0.9416);transform-origin:0 0;">View data created by tools in a dependency tree</div>
<svg class="a" style="left:561px;top:1114px" width="17" height="12" viewBox="0 0 17 12"><path d="M2,2 L8.5,8.5 L15,2" fill="none" stroke="#007960" stroke-width="3"/></svg>
<div class="a" style="left:189.5px;top:1143.5px;width:397.5px;height:1.2px;background:#dedede"></div>
<svg class="a" style="left:200px;top:1153px" width="21" height="19" viewBox="0 0 21 19"><path d="M1,13 L4,1.5 L7.5,14 L10.5,5 L13.5,15 L16,10 L19,17" fill="none" stroke="#0a8a45" stroke-width="2.1"/></svg>
<div class="t" style="left:224.5px;top:1154.7px;font-size:16px;color:#127d6a;transform:scaleX(0.9065);transform-origin:0 0;text-decoration:underline;text-decoration-color:#6fb3a3;">Press LowPassFilter</div>
<div class="a" style="left:205.5px;top:1174px;width:1px;height:14.5px;background:#ccc"></div><div class="a" style="left:205.5px;top:1188px;width:15px;height:1px;background:#ccc"></div>
<svg class="a" style="left:225px;top:1176px" width="21" height="19" viewBox="0 0 21 19"><path d="M1,13 L4,1.5 L7.5,14 L10.5,5 L13.5,15 L16,10 L19,17" fill="none" stroke="#3f51a6" stroke-width="2.1"/></svg>
<div class="t" style="left:249.5px;top:1177.6px;font-size:16px;color:#127d6a;transform:scaleX(0.8703);transform-origin:0 0;text-decoration:underline;text-decoration-color:#6fb3a3;">Press</div>
<div class="a" style="left:600px;top:54px;width:14px;height:1151px;background:#e0e0e0;border-left:1px solid #9a9a9a;border-right:1px solid #9a9a9a"></div>
<svg class="a" style="left:601px;top:625px" width="12" height="12" viewBox="0 0 12 12"><path d="M6,1.5 L2,6 L6,10.5 M10,1.5 L6,6 L10,10.5" fill="none" stroke="#555" stroke-width="1.1"/></svg>
<div class="a" style="left:614px;top:54px;width:1946px;height:63px;background:#f5f5f5;border-bottom:1px solid #e2e2e2"></div>
<div class="a" style="left:628px;top:62.3px;width:62px;height:47px;background:#007960;border-radius:6px"></div>
<svg class="a" style="left:634px;top:73px" width="27" height="25" viewBox="0 0 27 25"><path d="M2,0.5 V22.8 H25.5" fill="none" stroke="#fff" stroke-width="3"/><path d="M5.5,16 L9,10 L11.5,13.5 L15.5,6 L18,10.5 L21,2.5 L23,15" fill="none" stroke="#fff" stroke-width="1.6"/></svg>
<svg class="a" style="left:666px;top:82px" width="16" height="11" viewBox="0 0 16 11"><path d="M2,2 L8,8 L14,2" fill="none" stroke="#dcdcdc" stroke-width="3.2"/></svg>
<div class="a" style="left:697px;top:63.6px;width:67.5px;height:45px;background:#ebebeb;box-shadow:inset 0 3px 4px rgba(0,0,0,0.10);border-radius:2px"></div>
<svg class="a" style="left:722px;top:67.5px" width="19" height="21" viewBox="0 0 19 21"><rect x="1.2" y="3.5" width="16.6" height="16" rx="1.2" fill="#fff" stroke="#333" stroke-width="1.4"/><rect x="1" y="3.2" width="17" height="4" fill="#333"/><path d="M5.2,7 V19.5 M9.5,7 V19.5 M13.8,7 V19.5" stroke="#333" stroke-width="1"/><path d="M2,10.5 H17 M2,13.5 H17 M2,16.5 H17" stroke="#bbb" stroke-width="0.7"/><rect x="3.8" y="0.6" width="2.8" height="5" rx="1.4" fill="#fff" stroke="#333" stroke-width="1.1"/><rect x="11.8" y="0.6" width="2.8" height="5" rx="1.4" fill="#fff" stroke="#333" stroke-width="1.1"/></svg>
<div class="t" style="left:707.9px;top:89.9px;font-size:12px;color:#333;transform:scaleX(0.9671);transform-origin:0 0;">Calendar</div>
<svg class="a" style="left:781px;top:67px" width="20" height="20" viewBox="0 0 20 20"><g fill="none" stroke="#333" stroke-width="1.9"><rect x="2.2" y="2.2" width="7.5" height="7" rx="2.3" transform="rotate(45 6 5.7)"/><rect x="9.5" y="9.5" width="7.5" height="7" rx="2.3" transform="rotate(45 13.2 13)"/></g><path d="M8.5,8.5 L11,11" stroke="#333" stroke-width="1.6"/></svg>
<div class="t" style="left:776.5px;top:89.9px;font-size:12px;color:#333;transform:scaleX(0.9407);transform-origin:0 0;">Chain</div>
<svg class="a" style="left:838.5px;top:70.5px" width="20" height="17" viewBox="0 0 20 17"><rect x="0.5" y="0.7" width="19" height="4.2" rx="1" fill="#aaa"/><rect x="0.5" y="6.5" width="19" height="4" rx="1" fill="#aaa"/><rect x="0.5" y="11.8" width="19" height="4.2" rx="1" fill="#aaa"/><rect x="0.5" y="0.7" width="13" height="4.2" rx="1" fill="#333"/><rect x="0.5" y="6.5" width="6.5" height="4" rx="1" fill="#333"/><rect x="0.5" y="11.8" width="10" height="4.2" rx="1" fill="#333"/><rect x="14" y="2" width="4.5" height="1.6" fill="#eee"/><rect x="11" y="13" width="7.5" height="1.6" fill="#eee"/></svg>
<div class="t" style="left:828.0px;top:89.9px;font-size:12px;color:#333;transform:scaleX(0.9312);transform-origin:0 0;">Capsule</div>
<div class="a" style="left:888px;top:63px;width:1px;height:46px;background:#dcdcdc"></div>
<svg class="a" style="left:915px;top:69px" width="40" height="20" viewBox="0 0 40 20"><path d="M3.5,0.5 L0.5,4.5 H6.5 Z" fill="#333"/><path d="M3.5,4 V18" stroke="#333" stroke-width="2.4"/><path d="M10,19.5 L7,15.5 H13 Z" fill="#333"/><path d="M10,2 V16" stroke="#333" stroke-width="2.4"/><path d="M16,2 V18.5 H37.5" fill="none" stroke="#666" stroke-width="1.6"/><path d="M19,14 L24,8.5 L28,11.5 L34,4" fill="none" stroke="#333" stroke-width="2.2"/><path d="M30.5,1.5 H36 V7.5 Z" fill="#333"/></svg>
<div class="t" style="left:908.7px;top:89.9px;font-size:12px;color:#333;transform:scaleX(0.9181);transform-origin:0 0;">One Lane</div>
<svg class="a" style="left:987px;top:69px" width="40" height="20" viewBox="0 0 40 20"><path d="M3.5,0.5 L0.5,4.5 H6.5 Z" fill="#333"/><path d="M3.5,4 V18" stroke="#333" stroke-width="2.4"/><path d="M10,19.5 L7,15.5 H13 Z" fill="#333"/><path d="M10,2 V16" stroke="#333" stroke-width="2.4"/><path d="M16,2 V18.5 H37.5" fill="none" stroke="#666" stroke-width="1.6"/><path d="M19,14 L24,8.5 L28,11.5 L34,4" fill="none" stroke="#333" stroke-width="2.2"/><path d="M30.5,1.5 H36 V7.5 Z" fill="#333"/></svg>
<div class="t" style="left:979.0px;top:89.9px;font-size:12px;color:#333;transform:scaleX(0.8926);transform-origin:0 0;">One Y-Axis</div>
<svg class="a" style="left:1056px;top:69px" width="40" height="20" viewBox="0 0 40 20"><path d="M5,1 L1.5,5 H8.5 Z M5,19 L1.5,15 H8.5 Z" fill="#333"/><path d="M5,4 V8 M5,11 V16" stroke="#333" stroke-width="2.4"/><path d="M12,2 V18.5 H33.5" fill="none" stroke="#666" stroke-width="1.6"/><path d="M15,14 L20,8.5 L24,11.5 L30,4" fill="none" stroke="#333" stroke-width="2.2"/><path d="M26.5,1.5 H32 V7.5 Z" fill="#333"/></svg>
<div class="t" style="left:1054.0px;top:89.9px;font-size:12px;color:#333;transform:scaleX(0.9431);transform-origin:0 0;">Spread</div>
<svg class="a" style="left:1115px;top:69px" width="28" height="18" viewBox="0 0 28 18"><path d="M1,1.5 Q1,0.5 2,0.5 H9 L20,10.5 L13,17.5 L1,7.5 Z" fill="#333"/><circle cx="4.7" cy="4.2" r="1.5" fill="#f5f5f5"/><path d="M20.5,10.5 L27,10.5 L23.75,13.5 Z" fill="#333"/></svg>
<div class="t" style="left:1112.0px;top:89.9px;font-size:12px;color:#333;transform:scaleX(0.9611);transform-origin:0 0;">Labels</div>
<div class="a" style="left:1165.5px;top:63px;width:1px;height:46px;background:#dcdcdc"></div>
<svg class="a" style="left:1187px;top:68px" width="30" height="20" viewBox="0 0 30 20"><path d="M1,14 L5,1 L9,13.5 L10.5,5" fill="none" stroke="#333" stroke-width="1.9"/><g fill="#333"><circle cx="12" cy="8" r="0.9"/><circle cx="12.5" cy="12" r="0.9"/><circle cx="14" cy="15.5" r="0.9"/><circle cx="16.5" cy="11" r="0.9"/><circle cx="19.5" cy="13.5" r="0.8"/></g><path d="M22,10 H29 L25.5,13.5 Z" fill="#333"/></svg>
<div class="t" style="left:1179.0px;top:91.1px;font-size:12px;color:#333;transform:scaleX(0.9927);transform-origin:0 0;">Dimming</div>
<div class="a" style="left:1245.5px;top:63px;width:1px;height:46px;background:#dcdcdc"></div>
<svg class="a" style="left:1264px;top:68px" width="20" height="20" viewBox="0 0 20 20"><circle cx="8" cy="8" r="6.5" fill="none" stroke="#a8a8a8" stroke-width="1.9"/><path d="M12.8,12.8 L18.5,18.5" stroke="#a8a8a8" stroke-width="2.6" stroke-linecap="round"/><path d="M8,4.8 V11.2 M4.8,8 H11.2" stroke="#a8a8a8" stroke-width="1.4"/></svg>
<div class="t" style="left:1259.0px;top:89.9px;font-size:12px;color:#a9a9a9;transform:scaleX(0.9776);transform-origin:0 0;">Zoom</div>
<svg class="a" style="left:1308px;top:66.5px" width="30" height="20" viewBox="0 0 30 20"><path d="M3,8 H1.5 V18.5 H17.5 V8 H16" fill="none" stroke="#333" stroke-width="1.9"/><path d="M9.5,15 V5" stroke="#333" stroke-width="2.2"/><path d="M9.5,0.5 L4.5,5.5 H14.5 Z" fill="#333"/><path d="M21,12 H28 L24.5,15.5 Z" fill="#333"/></svg>
<div class="t" style="left:1306.0px;top:89.9px;font-size:12px;color:#333;transform:scaleX(0.9658);transform-origin:0 0;">Export</div>
<svg class="a" style="left:1369px;top:68.5px" width="20" height="17" viewBox="0 0 20 17"><path d="M10,1 C15.5,1 19,3.8 19,7.2 C19,10.6 15.5,13.4 10,13.4 C8.5,13.4 7,13.2 6,12.8 L2,15.5 L3.5,11.8 C1.8,10.6 1,9 1,7.2 C1,3.8 4.5,1 10,1 Z" fill="none" stroke="#a8a8a8" stroke-width="1.5"/><circle cx="6.3" cy="7.3" r="1.1" fill="#a8a8a8"/><circle cx="10" cy="7.3" r="1.1" fill="#a8a8a8"/><circle cx="13.7" cy="7.3" r="1.1" fill="#a8a8a8"/></svg>
<div class="t" style="left:1355.0px;top:89.9px;font-size:12px;color:#a9a9a9;">Annotate</div>
<div class="a" style="left:637px;top:130px;width:1905px;height:377.5px;background:#f8f8f8"></div>
<svg class="a" style="left:0;top:0" width="2560" height="1205" viewBox="0 0 2560 1205"><line x1="637.3" y1="130" x2="637.3" y2="507.5" stroke="#3f51a6" stroke-width="1.4"/><line x1="637.3" y1="520" x2="637.3" y2="897" stroke="#0a8a45" stroke-width="1.4"/><line x1="637" y1="897.2" x2="2542" y2="897.2" stroke="#dfe5ef" stroke-width="1.3"/><line x1="2235.5" y1="130" x2="2235.5" y2="886" stroke="#c3d2e2" stroke-width="1.3"/><path d="M637.5,255.3 638.1,288.6 640.4,254.4 641.0,290.7 643.3,258.4 643.9,291.7 646.2,249.4 646.8,288.1 649.1,243.4 649.7,284.4 652.0,249.0 652.6,286.2 654.9,254.2 655.5,286.1 657.8,251.4 658.4,286.8 660.7,242.9 661.3,277.2 663.6,237.6 664.2,275.3 666.5,235.4 667.1,270.6 669.4,231.3 670.0,267.0 672.3,220.8 672.9,257.9 675.2,224.0 675.8,262.2 678.1,226.3 678.7,261.3 681.0,218.5 681.6,256.8 683.9,218.4 684.5,255.6 686.8,208.7 687.4,246.6 689.7,221.0 690.3,262.5 692.6,219.4 693.2,265.4 695.5,221.1 696.1,252.3 698.4,219.3 699.0,253.8 701.3,213.3 701.9,250.2 704.2,209.1 704.8,247.1 707.1,208.3 707.7,251.2 710.0,211.9 710.6,245.2 712.9,214.1 713.5,246.0 715.8,210.6 716.4,251.2 718.7,206.8 719.3,245.9 721.6,201.7 722.2,243.3 724.5,209.4 725.1,242.9 727.4,220.8 728.0,252.7 730.3,237.8 730.9,268.2 733.2,252.5 733.8,285.2 736.1,255.3 736.7,288.1 739.0,254.5 739.6,291.3 741.9,249.5 742.5,283.4 744.8,258.1 745.4,309.3 747.7,260.6 748.3,304.6 750.6,258.0 751.2,300.8 753.5,269.5 754.1,303.2 756.4,262.9 757.0,300.7 759.3,251.0 759.9,293.9 762.2,250.6 762.8,287.4 765.1,256.3 765.7,286.7 768.0,265.6 768.6,307.1 770.9,277.5 771.5,321.1 773.8,292.5 774.4,325.5 776.7,296.8 777.3,338.9 779.6,307.6 780.2,343.8 782.5,312.5 783.1,353.2 785.4,313.5 786.0,351.4 788.3,317.3 788.9,352.9 791.2,313.1 791.8,345.2 794.1,302.9 794.7,339.6 797.0,305.2 797.6,342.2 799.9,310.9 800.5,347.8 802.8,305.7 803.4,345.2 805.7,311.9 806.3,345.2 808.6,310.5 809.2,346.5 811.5,306.7 812.1,345.6 814.4,304.5 815.0,343.8 817.3,298.3 817.9,344.0 820.2,310.0 820.8,345.6 823.1,303.2 823.7,342.1 826.0,302.2 826.6,341.6 828.9,302.3 829.5,336.0 831.8,298.9 832.4,338.2 834.7,300.7 835.3,338.5 837.6,300.6 838.2,337.5 840.5,297.3 841.1,338.3 843.4,297.3 844.0,337.8 846.3,300.0 846.9,333.9 849.2,299.1 849.8,334.3 852.1,292.8 852.7,328.9 855.0,286.3 855.6,329.3 857.9,290.9 858.5,327.1 860.8,292.0 861.4,326.1 863.7,291.4 864.3,334.5 866.6,292.3 867.2,325.6 869.5,294.5 870.1,328.5 872.4,292.4 873.0,341.7 875.3,298.2 875.9,331.0 878.2,294.9 878.8,332.5 881.1,295.9 881.7,334.8 884.0,294.3 884.6,332.1 886.9,295.0 887.5,335.0 889.8,299.8 890.4,336.3 892.7,297.4 893.3,337.7 895.6,298.9 896.2,334.3 898.5,304.1 899.1,335.9 901.4,301.9 902.0,339.2 904.3,305.6 904.9,349.5 907.2,302.8 907.8,337.9 910.1,299.2 910.7,335.6 913.0,293.9 913.6,332.5 915.9,298.0 916.5,337.2 918.8,282.4 919.4,319.7 921.7,270.7 922.3,302.1 924.6,271.6 925.2,303.3 927.5,257.7 928.1,294.4 930.4,255.1 931.0,289.4 933.3,234.0 933.9,277.6 936.2,225.4 936.8,272.1 939.1,218.3 939.7,255.1 942.0,205.7 942.6,237.6 944.9,199.5 945.5,229.9 947.8,197.8 948.4,235.6 950.7,192.0 951.3,233.2 953.6,195.8 954.2,233.7 956.5,209.2 957.1,245.4 959.4,194.1 960.0,234.9 962.3,199.0 962.9,238.4 965.2,199.2 965.8,239.5 968.1,206.0 968.7,237.8 971.0,214.9 971.6,251.4 973.9,217.4 974.5,268.5 976.8,223.9 977.4,262.7 979.7,237.4 980.3,273.0 982.6,252.2 983.2,289.2 985.5,253.2 986.1,293.5 988.4,260.5 989.0,300.7 991.3,275.8 991.9,307.4 994.2,283.6 994.8,324.3 997.1,264.5 997.7,304.0 1000.0,279.6 1000.6,316.4 1002.9,305.5 1003.5,343.1 1005.8,309.4 1006.4,342.7 1008.7,315.5 1009.3,350.5 1011.6,320.1 1012.2,355.6 1014.5,303.4 1015.1,341.0 1017.4,317.3 1018.0,358.4 1020.3,307.7 1020.9,350.2 1023.2,318.1 1023.8,351.2 1026.1,323.7 1026.7,359.6 1029.0,341.4 1029.6,378.7 1031.9,349.1 1032.5,383.7 1034.8,352.1 1035.4,388.7 1037.7,357.6 1038.3,388.7 1040.6,365.8 1041.2,404.1 1043.5,368.4 1044.1,402.4 1046.4,339.1 1047.0,379.2 1049.3,332.2 1049.9,371.1 1052.2,339.2 1052.8,377.6 1055.1,349.8 1055.7,386.6 1058.0,354.2 1058.6,388.7 1060.9,357.0 1061.5,393.4 1063.8,359.2 1064.4,393.2 1066.7,359.5 1067.3,399.3 1069.6,357.3 1070.2,397.5 1072.5,355.7 1073.1,388.8 1075.4,351.9 1076.0,387.7 1078.3,345.4 1078.9,381.2 1081.2,343.9 1081.8,376.7 1084.1,344.9 1084.7,379.3 1087.0,348.7 1087.6,382.1 1089.9,358.2 1090.5,398.0 1092.8,362.6 1093.4,393.0 1095.7,351.9 1096.3,397.3 1098.6,361.2 1099.2,402.9 1101.5,367.9 1102.1,399.8 1104.4,357.4 1105.0,399.1 1107.3,351.1 1107.9,400.0 1110.2,361.4 1110.8,402.4 1113.1,366.1 1113.7,402.3 1116.0,370.5 1116.6,404.7 1118.9,365.9 1119.5,408.7 1121.8,372.2 1122.4,413.5 1124.7,382.8 1125.3,416.2 1127.6,382.5 1128.2,414.8 1130.5,378.9 1131.1,413.6 1133.4,377.2 1134.0,409.0 1136.3,372.5 1136.9,408.6 1139.2,369.7 1139.8,404.7 1142.1,360.2 1142.7,397.6 1145.0,359.7 1145.6,398.4 1147.9,356.4 1148.5,390.9 1150.8,352.1 1151.4,385.9 1153.7,347.6 1154.3,379.0 1156.6,343.1 1157.2,385.6 1159.5,341.3 1160.1,380.1 1162.4,343.8 1163.0,379.2 1165.3,349.6 1165.9,391.3 1168.2,352.9 1168.8,392.0 1171.1,351.2 1171.7,385.1 1174.0,348.3 1174.6,381.7 1176.9,334.9 1177.5,372.7 1179.8,320.5 1180.4,353.6 1182.7,315.9 1183.3,346.4 1185.6,314.9 1186.2,352.0 1188.5,309.6 1189.1,348.3 1191.4,288.3 1192.0,337.1 1194.3,279.3 1194.9,326.4 1197.2,281.9 1197.8,321.9 1200.1,293.1 1200.7,327.9 1203.0,279.8 1203.6,316.7 1205.9,283.6 1206.5,323.2 1208.8,292.9 1209.4,330.9 1211.7,293.7 1212.3,340.2 1214.6,300.3 1215.2,339.4 1217.5,298.5 1218.1,331.0 1220.4,290.8 1221.0,328.9 1223.3,291.6 1223.9,330.7 1226.2,295.9 1226.8,331.4 1229.1,304.3 1229.7,340.9 1232.0,313.7 1232.6,347.2 1234.9,331.3 1235.5,367.6 1237.8,340.1 1238.4,375.3 1240.7,332.2 1241.3,369.9 1243.6,336.8 1244.2,379.1 1246.5,340.8 1247.1,373.0 1249.4,315.0 1250.0,354.2 1252.3,329.6 1252.9,366.8 1255.2,324.7 1255.8,363.2 1258.1,320.3 1258.7,352.7 1261.0,326.4 1261.6,369.7 1263.9,329.5 1264.5,363.0 1266.8,331.2 1267.4,365.4 1269.7,337.0 1270.3,375.3 1272.6,309.0 1273.2,346.8 1275.5,321.7 1276.1,360.5 1278.4,320.8 1279.0,359.8 1281.3,326.5 1281.9,376.0 1284.2,333.5 1284.8,372.2 1287.1,326.7 1287.7,370.6 1290.0,332.9 1290.6,369.9 1292.9,345.8 1293.5,380.3 1295.8,354.4 1296.4,391.7 1298.7,357.0 1299.3,395.2 1301.6,349.5 1302.2,389.7 1304.5,371.2 1305.1,410.2 1307.4,381.3 1308.0,418.0 1310.3,381.5 1310.9,423.2 1313.2,382.9 1313.8,419.3 1316.1,380.2 1316.7,417.0 1319.0,372.6 1319.6,424.2 1321.9,399.5 1322.5,437.6 1324.8,411.5 1325.4,448.5 1327.7,409.4 1328.3,455.7 1330.6,416.5 1331.2,453.5 1333.5,396.6 1334.1,431.2 1336.4,384.7 1337.0,418.3 1339.3,386.2 1339.9,420.9 1342.2,387.8 1342.8,426.8 1345.1,392.6 1345.7,431.9 1348.0,387.8 1348.6,429.9 1350.9,390.3 1351.5,430.6 1353.8,399.6 1354.4,436.2 1356.7,401.5 1357.3,439.3 1359.6,405.1 1360.2,442.8 1362.5,400.2 1363.1,438.1 1365.4,407.7 1366.0,440.2 1368.3,407.8 1368.9,449.1 1371.2,413.9 1371.8,450.2 1374.1,412.8 1374.7,451.4 1377.0,397.3 1377.6,434.2 1379.9,391.0 1380.5,429.3 1382.8,372.3 1383.4,408.9 1385.7,353.8 1386.3,390.2 1388.6,336.7 1389.2,372.9 1391.5,327.8 1392.1,368.9 1394.4,335.0 1395.0,372.3 1397.3,326.5 1397.9,363.0 1400.2,312.4 1400.8,345.6 1403.1,303.6 1403.7,341.8 1406.0,297.2 1406.6,331.5 1408.9,295.0 1409.5,326.7 1411.8,288.0 1412.4,336.7 1414.7,287.0 1415.3,323.4 1417.6,282.9 1418.2,324.6 1420.5,287.8 1421.1,321.9 1423.4,277.0 1424.0,322.4 1426.3,285.3 1426.9,317.7 1429.2,281.2 1429.8,321.4 1432.1,283.0 1432.7,315.5 1435.0,278.4 1435.6,313.4 1437.9,278.2 1438.5,316.7 1440.8,270.0 1441.4,309.7 1443.7,269.2 1444.3,309.9 1446.6,267.7 1447.2,304.6 1449.5,268.7 1450.1,305.0 1452.4,257.9 1453.0,294.2 1455.3,252.8 1455.9,294.7 1458.2,248.8 1458.8,287.3 1461.1,245.0 1461.7,284.3 1464.0,239.1 1464.6,278.3 1466.9,235.0 1467.5,273.1 1469.8,233.6 1470.4,269.4 1472.7,237.3 1473.3,268.5 1475.6,233.3 1476.2,271.1 1478.5,234.9 1479.1,274.2 1481.4,219.7 1482.0,256.4 1484.3,212.6 1484.9,249.3 1487.2,205.7 1487.8,243.1 1490.1,198.8 1490.7,235.0 1493.0,203.7 1493.6,243.9 1495.9,196.1 1496.5,232.1 1498.8,170.3 1499.4,203.4 1501.7,186.6 1502.3,224.2 1504.6,193.6 1505.2,241.2 1507.5,195.0 1508.1,233.5 1510.4,187.6 1511.0,222.8 1513.3,159.3 1513.9,202.2 1516.2,164.8 1516.8,201.6 1519.1,180.9 1519.7,217.8 1522.0,179.3 1522.6,216.9 1524.9,190.7 1525.5,227.1 1527.8,213.6 1528.4,248.6 1530.7,219.3 1531.3,259.2 1533.6,229.3 1534.2,268.3 1536.5,223.0 1537.1,254.6 1539.4,227.4 1540.0,263.6 1542.3,214.4 1542.9,251.3 1545.2,201.9 1545.8,238.9 1548.1,202.9 1548.7,243.5 1551.0,212.3 1551.6,250.8 1553.9,228.3 1554.5,267.7 1556.8,242.5 1557.4,279.5 1559.7,235.4 1560.3,268.2 1562.6,231.0 1563.2,264.5 1565.5,232.5 1566.1,268.3 1568.4,241.7 1569.0,281.3 1571.3,249.0 1571.9,283.4 1574.2,253.3 1574.8,295.5 1577.1,263.2 1577.7,301.5 1580.0,263.7 1580.6,298.9 1582.9,260.1 1583.5,299.5 1585.8,267.0 1586.4,301.6 1588.7,266.6 1589.3,306.9 1591.6,265.0 1592.2,302.7 1594.5,270.7 1595.1,304.4 1597.4,270.8 1598.0,306.9 1600.3,278.0 1600.9,315.3 1603.2,285.4 1603.8,321.3 1606.1,277.9 1606.7,327.6 1609.0,288.4 1609.6,330.5 1611.9,288.8 1612.5,326.6 1614.8,284.4 1615.4,324.7 1617.7,277.2 1618.3,315.3 1620.6,277.2 1621.2,313.4 1623.5,281.7 1624.1,322.2 1626.4,283.8 1627.0,321.6 1629.3,292.7 1629.9,329.4 1632.2,299.3 1632.8,336.4 1635.1,302.8 1635.7,339.2 1638.0,306.4 1638.6,343.6 1640.9,311.4 1641.5,348.3 1643.8,312.0 1644.4,347.3 1646.7,315.7 1647.3,354.0 1649.6,323.0 1650.2,357.4 1652.5,328.9 1653.1,364.0 1655.4,334.1 1656.0,369.6 1658.3,334.6 1658.9,371.7 1661.2,340.1 1661.8,376.3 1664.1,342.0 1664.7,382.9 1667.0,335.6 1667.6,376.9 1669.9,344.3 1670.5,376.9 1672.8,346.8 1673.4,384.2 1675.7,342.1 1676.3,382.6 1678.6,343.4 1679.2,385.1 1681.5,346.4 1682.1,385.0 1684.4,347.5 1685.0,387.6 1687.3,356.1 1687.9,390.6 1690.2,357.5 1690.8,392.0 1693.1,354.6 1693.7,390.7 1696.0,359.3 1696.6,397.9 1698.9,362.1 1699.5,401.8 1701.8,361.9 1702.4,396.6 1704.7,361.2 1705.3,400.0 1707.6,353.7 1708.2,404.6 1710.5,366.5 1711.1,404.9 1713.4,365.5 1714.0,404.6 1716.3,365.8 1716.9,402.7 1719.2,364.8 1719.8,403.4 1722.1,359.0 1722.7,399.4 1725.0,353.7 1725.6,388.3 1727.9,348.1 1728.5,388.0 1730.8,339.5 1731.4,379.6 1733.7,335.4 1734.3,366.7 1736.6,316.9 1737.2,357.1 1739.5,300.6 1740.1,339.3 1742.4,292.0 1743.0,328.3 1745.3,287.3 1745.9,335.1 1748.2,279.4 1748.8,320.4 1751.1,273.7 1751.7,313.1 1754.0,265.9 1754.6,301.1 1756.9,262.1 1757.5,304.2 1759.8,247.8 1760.4,287.5 1762.7,241.6 1763.3,274.4 1765.6,231.0 1766.2,271.1 1768.5,220.8 1769.1,260.9 1771.4,229.7 1772.0,265.3 1774.3,204.7 1774.9,252.9 1777.2,217.3 1777.8,253.8 1780.1,234.8 1780.7,275.7 1783.0,230.6 1783.6,270.0 1785.9,227.4 1786.5,270.0 1788.8,220.7 1789.4,261.0 1791.7,229.9 1792.3,266.1 1794.6,249.7 1795.2,282.6 1797.5,272.4 1798.1,308.2 1800.4,276.6 1801.0,315.6 1803.3,258.2 1803.9,300.3 1806.2,269.3 1806.8,301.8 1809.1,262.0 1809.7,300.1 1812.0,267.6 1812.6,307.6 1814.9,268.7 1815.5,307.5 1817.8,278.2 1818.4,326.7 1820.7,288.5 1821.3,325.5 1823.6,293.5 1824.2,329.6 1826.5,288.5 1827.1,324.4 1829.4,289.1 1830.0,330.3 1832.3,301.1 1832.9,340.6 1835.2,314.0 1835.8,352.2 1838.1,312.2 1838.7,346.9 1841.0,295.6 1841.6,334.4 1843.9,285.8 1844.5,322.8 1846.8,294.9 1847.4,334.8 1849.7,308.7 1850.3,341.4 1852.6,308.6 1853.2,345.1 1855.5,310.4 1856.1,341.8 1858.4,310.5 1859.0,345.7 1861.3,308.1 1861.9,349.0 1864.2,304.1 1864.8,347.1 1867.1,311.5 1867.7,348.8 1870.0,305.3 1870.6,346.4 1872.9,311.5 1873.5,343.2 1875.8,314.1 1876.4,348.4 1878.7,311.7 1879.3,354.7 1881.6,315.2 1882.2,348.9 1884.5,311.8 1885.1,350.3 1887.4,315.5 1888.0,351.4 1890.3,306.9 1890.9,351.9 1893.2,311.3 1893.8,354.0 1896.1,316.6 1896.7,357.1 1899.0,326.4 1899.6,357.8 1901.9,323.9 1902.5,360.7 1904.8,332.6 1905.4,365.6 1907.7,336.3 1908.3,370.8 1910.6,344.1 1911.2,379.0 1913.5,362.8 1914.1,399.5 1916.4,369.7 1917.0,412.0 1919.3,383.4 1919.9,420.6 1922.2,383.8 1922.8,419.3 1925.1,386.2 1925.7,421.6 1928.0,390.1 1928.6,428.9 1930.9,394.9 1931.5,429.6 1933.8,390.3 1934.4,428.5 1936.7,393.6 1937.3,432.1 1939.6,399.3 1940.2,436.0 1942.5,398.5 1943.1,433.9 1945.4,401.2 1946.0,440.7 1948.3,402.3 1948.9,435.0 1951.2,401.7 1951.8,450.9 1954.1,390.9 1954.7,436.6 1957.0,405.3 1957.6,439.7 1959.9,402.9 1960.5,437.9 1962.8,399.0 1963.4,435.4 1965.7,401.5 1966.3,439.2 1968.6,400.5 1969.2,439.7 1971.5,400.4 1972.1,432.3 1974.4,394.4 1975.0,429.9 1977.3,391.7 1977.9,446.8 1980.2,395.4 1980.8,434.9 1983.1,389.2 1983.7,427.6 1986.0,385.4 1986.6,419.6 1988.9,381.8 1989.5,416.2 1991.8,375.1 1992.4,413.4 1994.7,354.7 1995.3,390.4 1997.6,334.0 1998.2,371.0 2000.5,340.6 2001.1,377.5 2003.4,344.1 2004.0,381.6 2006.3,326.1 2006.9,372.3 2009.2,327.4 2009.8,366.0 2012.1,321.5 2012.7,356.8 2015.0,321.0 2015.6,356.5 2017.9,320.0 2018.5,355.1 2020.8,311.5 2021.4,350.7 2023.7,299.1 2024.3,338.4 2026.6,296.9 2027.2,333.3 2029.5,291.6 2030.1,325.6 2032.4,271.8 2033.0,314.3 2035.3,272.0 2035.9,308.3 2038.2,267.9 2038.8,306.2 2041.1,261.3 2041.7,297.6 2044.0,258.3 2044.6,291.9 2046.9,255.8 2047.5,297.7 2049.8,241.5 2050.4,294.3 2052.7,247.3 2053.3,284.0 2055.6,246.2 2056.2,282.3 2058.5,249.6 2059.1,288.2 2061.4,250.3 2062.0,285.3 2064.3,234.9 2064.9,270.0 2067.2,265.7 2067.8,297.5 2070.1,257.3 2070.7,291.0 2073.0,228.9 2073.6,269.0 2075.9,255.3 2076.5,291.7 2078.8,261.6 2079.4,299.2 2081.7,248.5 2082.3,283.6 2084.6,258.7 2085.2,291.3 2087.5,269.2 2088.1,306.5 2090.4,268.2 2091.0,305.7 2093.3,300.1 2093.9,339.3 2096.2,309.8 2096.8,348.0 2099.1,315.3 2099.7,357.2 2102.0,318.6 2102.6,355.8 2104.9,296.7 2105.5,336.1 2107.8,287.9 2108.4,326.6 2110.7,282.7 2111.3,331.6 2113.6,293.7 2114.2,331.3 2116.5,288.8 2117.1,327.2 2119.4,303.8 2120.0,339.6 2122.3,301.7 2122.9,336.5 2125.2,301.3 2125.8,339.0 2128.1,306.4 2128.7,340.8 2131.0,316.9 2131.6,355.0 2133.9,333.6 2134.5,371.7 2136.8,350.0 2137.4,388.9 2139.7,363.1 2140.3,400.6 2142.6,365.0 2143.2,405.8 2145.5,363.9 2146.1,401.4 2148.4,365.4 2149.0,404.5 2151.3,366.4 2151.9,399.7 2154.2,358.8 2154.8,399.0 2157.1,361.9 2157.7,399.3 2160.0,367.7 2160.6,407.2 2162.9,364.1 2163.5,406.8 2165.8,365.1 2166.4,406.2 2168.7,367.5 2169.3,406.7 2171.6,371.0 2172.2,408.1 2174.5,369.4 2175.1,408.1 2177.4,366.8 2178.0,401.6 2180.3,361.9 2180.9,406.0 2183.2,367.7 2183.8,406.4 2186.1,368.9 2186.7,404.7 2189.0,367.2 2189.6,408.2 2191.9,373.8 2192.5,410.2 2194.8,375.7 2195.4,410.6 2197.7,364.6 2198.3,412.4 2200.6,381.2 2201.2,418.7 2203.5,389.4 2204.1,426.5 2206.4,396.4 2207.0,432.3 2209.3,405.4 2209.9,446.2 2212.2,409.7 2212.8,441.7 2215.1,410.9 2215.7,449.4 2218.0,409.8 2218.6,450.7 2220.9,413.2 2221.5,447.6 2223.8,414.3 2224.4,452.6 2226.7,416.3 2227.3,449.2 2229.6,412.5 2230.2,451.4 2232.5,416.7 2233.1,453.2 2235.4,420.8 2236.0,457.4 2238.3,420.1 2238.9,464.1 2241.2,418.8 2241.8,452.2 2244.1,419.0 2244.7,456.7 2247.0,414.7 2247.6,456.2 2249.9,414.9 2250.5,452.6 2252.8,412.0 2253.4,452.2 2255.7,416.5 2256.3,452.3 2258.6,412.0 2259.2,448.7 2261.5,413.4 2262.1,450.9 2264.4,406.0 2265.0,441.7 2267.3,396.6 2267.9,435.2 2270.2,385.6 2270.8,417.4 2273.1,383.4 2273.7,418.8 2276.0,380.9 2276.6,416.5 2278.9,375.4 2279.5,407.9 2281.8,377.7 2282.4,416.9 2284.7,370.9 2285.3,418.6 2287.6,368.0 2288.2,405.1 2290.5,358.1 2291.1,394.7 2293.4,347.1 2294.0,382.8 2296.3,334.9 2296.9,380.6 2299.2,325.3 2299.8,365.9 2302.1,309.7 2302.7,345.4 2305.0,310.8 2305.6,347.6 2307.9,310.6 2308.5,343.1 2310.8,306.8 2311.4,339.1 2313.7,299.2 2314.3,331.3 2316.6,291.1 2317.2,329.0 2319.5,283.2 2320.1,320.8 2322.4,279.7 2323.0,312.3 2325.3,268.9 2325.9,310.3 2328.2,275.3 2328.8,312.9 2331.1,272.8 2331.7,309.4 2334.0,260.9 2334.6,296.5 2336.9,263.3 2337.5,299.0 2339.8,281.2 2340.4,316.7 2342.7,287.0 2343.3,321.3 2345.6,294.7 2346.2,334.3 2348.5,286.3 2349.1,323.0 2351.4,278.3 2352.0,316.6 2354.3,310.5 2354.9,348.6 2357.2,294.9 2357.8,330.8 2360.1,280.0 2360.7,321.1 2363.0,304.8 2363.6,338.8 2365.9,311.8 2366.5,348.1 2368.8,317.7 2369.4,353.2 2371.7,302.0 2372.3,332.6 2374.6,292.0 2375.2,327.6 2377.5,307.1 2378.1,341.3 2380.4,316.5 2381.0,350.4 2383.3,327.5 2383.9,368.4 2386.2,333.4 2386.8,377.8 2389.1,366.2 2389.7,399.6 2392.0,353.9 2392.6,391.6 2394.9,358.5 2395.5,396.0 2397.8,361.4 2398.4,396.2 2400.7,349.7 2401.3,387.2 2403.6,353.1 2404.2,393.2 2406.5,358.1 2407.1,398.2 2409.4,363.7 2410.0,399.8 2412.3,366.8 2412.9,401.0 2415.2,330.9 2415.8,364.3 2418.1,313.7 2418.7,349.6 2421.0,302.1 2421.6,337.0 2423.9,298.3 2424.5,333.6 2426.8,296.3 2427.4,338.4 2429.7,300.3 2430.3,337.4 2432.6,304.6 2433.2,337.5 2435.5,298.0 2436.1,340.4 2438.4,312.1 2439.0,352.1 2441.3,350.5 2441.9,386.8 2444.2,385.4 2444.8,423.3 2447.1,386.6 2447.7,423.0 2450.0,392.8 2450.6,426.6 2452.9,395.1 2453.5,432.1 2455.8,397.7 2456.4,431.3 2458.7,397.3 2459.3,432.0 2461.6,405.3 2462.2,439.7 2464.5,404.2 2465.1,439.6 2467.4,404.7 2468.0,442.4 2470.3,407.7 2470.9,441.3 2473.2,402.1 2473.8,442.4 2476.1,402.4 2476.7,438.2 2479.0,407.9 2479.6,445.8 2481.9,410.6 2482.5,447.0 2484.8,412.8 2485.4,445.5 2487.7,416.6 2488.3,453.6 2490.6,415.5 2491.2,455.9 2493.5,414.2 2494.1,451.5 2496.4,415.0 2497.0,455.1 2499.3,421.0 2499.9,458.7 2502.2,428.5 2502.8,463.0 2505.1,422.8 2505.7,459.2 2508.0,429.0 2508.6,462.1 2510.9,426.0 2511.5,465.9 2513.8,438.2 2514.4,473.4 2516.7,438.2 2517.3,471.9 2519.6,437.3 2520.2,485.2 2522.5,442.2 2523.1,476.7 2525.4,444.0 2526.0,475.5 2528.3,442.6 2528.9,478.6 2531.2,444.2 2531.8,483.1 2534.1,447.0 2534.7,480.8 2537.0,449.3 2537.6,480.8 2539.9,426.1 2540.5,472.6" fill="none" stroke="#3f51a6" stroke-width="1.35" stroke-linejoin="round"/><path d="M636.9,650.9C638.1,651.2 642.3,654.8 644.2,652.5C646.1,650.2 647.0,637.9 648.3,637.4C649.6,636.8 650.7,647.6 652.1,649.3C653.5,651.1 655.2,649.9 656.8,647.8C658.4,645.7 659.7,640.1 661.5,636.7C663.4,633.3 666.0,631.0 667.9,627.3C669.7,623.5 671.1,615.7 672.6,614.0C674.1,612.3 675.4,617.3 676.7,617.2C678.0,617.0 679.4,613.5 680.5,613.1C681.5,612.6 681.9,617.0 683.0,614.6C684.0,612.3 685.4,597.3 686.8,598.9C688.2,600.4 690.0,622.3 691.5,624.1C693.0,625.9 694.4,612.4 695.6,609.9C696.8,607.4 697.6,610.7 698.8,609.3C699.9,607.9 701.4,602.3 702.6,601.4C703.7,600.4 704.7,603.9 705.7,603.6C706.8,603.3 707.7,599.5 708.9,599.5C710.0,599.5 711.3,603.3 712.6,603.6C714.0,603.9 715.3,603.1 716.8,601.4C718.2,599.7 719.9,593.0 721.5,593.2C723.1,593.4 724.9,598.0 726.2,602.6C727.5,607.3 728.3,613.4 729.4,620.9C730.4,628.5 731.2,642.9 732.5,647.8C733.8,652.6 735.7,650.7 737.3,650.3C738.8,649.9 740.4,644.0 742.0,645.6C743.6,647.1 745.4,657.5 746.7,659.4C748.0,661.4 748.6,655.3 749.9,657.2C751.2,659.1 752.9,672.2 754.6,670.8C756.3,669.4 758.2,652.3 760.0,648.7C761.7,645.1 763.1,643.4 765.0,649.3C766.9,655.2 769.4,675.1 771.3,684.0C773.3,693.0 775.1,697.1 776.7,703.0C778.3,708.9 778.8,716.1 780.8,719.4C782.7,722.6 786.2,724.2 788.4,722.5C790.6,720.8 791.8,710.9 794.0,709.3C796.3,707.7 799.4,711.9 801.9,713.1C804.4,714.3 807.1,716.7 809.2,716.5C811.3,716.3 812.6,712.7 814.5,711.8C816.5,710.9 818.7,711.9 820.9,710.9C823.0,709.8 825.4,706.9 827.2,705.5C828.9,704.1 829.9,702.3 831.3,702.3C832.6,702.3 833.6,705.5 835.0,705.5C836.5,705.5 838.2,703.2 839.8,702.3C841.4,701.5 843.0,700.8 844.5,700.4C846.0,700.1 847.1,702.2 848.6,700.4C850.1,698.7 851.9,691.0 853.3,689.7C854.8,688.4 855.4,692.3 857.1,692.6C858.8,692.8 861.3,690.1 863.4,691.0C865.5,691.8 867.4,696.0 869.7,697.6C872.1,699.2 875.1,700.3 877.6,700.4C880.2,700.5 882.5,698.2 884.9,698.2C887.3,698.2 889.7,699.5 891.8,700.4C893.9,701.3 895.7,702.1 897.5,703.6C899.3,705.1 901.3,708.6 902.9,709.3C904.4,710.0 905.6,709.9 907.0,707.7C908.4,705.5 909.8,696.3 911.4,696.0C913.0,695.8 914.9,711.2 916.4,706.1C918.0,701.1 919.6,671.6 920.9,665.7C922.1,659.9 922.8,672.7 924.0,670.8C925.2,668.8 927.1,657.1 928.1,654.1C929.2,651.0 929.3,657.5 930.3,652.5C931.4,647.5 933.2,629.5 934.4,624.1C935.6,618.7 936.4,625.6 937.6,620.3C938.8,615.1 940.4,598.7 941.7,592.6C943.0,586.5 944.3,584.4 945.5,583.7C946.6,583.1 947.6,589.7 948.6,588.8C949.7,587.9 950.6,576.7 951.8,578.4C952.9,580.0 954.9,595.3 955.6,598.9C956.2,602.4 954.9,602.4 955.7,599.5C956.4,596.6 958.8,582.9 960.1,581.5C961.4,580.1 962.2,589.9 963.2,591.0C964.3,592.0 965.2,585.9 966.4,587.8C967.6,589.8 969.5,599.9 970.5,602.6C971.6,605.4 971.8,601.8 972.7,604.5C973.6,607.3 974.9,617.3 975.9,619.4C976.8,621.5 977.4,613.0 978.4,617.2C979.3,621.4 980.2,638.2 981.5,644.6C982.9,651.0 985.0,652.8 986.3,655.6C987.6,658.5 988.1,656.4 989.4,662.0C990.7,667.5 992.7,689.6 994.2,688.8C995.6,688.0 996.5,653.0 997.9,657.2C999.4,661.4 1001.6,705.2 1003.0,714.0C1004.4,722.8 1004.9,707.4 1006.2,709.9C1007.4,712.4 1009.1,728.8 1010.6,728.8C1012.0,728.9 1013.5,710.2 1014.7,710.2C1015.9,710.2 1016.6,727.5 1017.8,728.8C1019.0,730.1 1020.6,717.7 1021.9,718.1C1023.2,718.5 1024.3,725.2 1025.7,731.4C1027.1,737.5 1028.9,749.5 1030.4,755.0C1032.0,760.5 1033.9,762.6 1035.2,764.5C1036.5,766.3 1037.2,761.3 1038.3,766.1C1039.5,770.8 1040.5,797.7 1042.1,792.9C1043.7,788.0 1046.1,744.4 1047.8,737.0C1049.5,729.7 1050.9,744.3 1052.5,748.7C1054.1,753.1 1055.7,760.4 1057.3,763.5C1058.8,766.7 1060.1,765.4 1062.0,767.6C1063.8,769.9 1066.5,778.0 1068.3,777.1C1070.1,776.2 1071.7,765.1 1073.0,762.3C1074.3,759.5 1075.1,762.1 1076.2,760.4C1077.2,758.6 1078.3,753.1 1079.3,751.9C1080.4,750.6 1081.4,753.0 1082.5,752.8C1083.5,752.6 1084.3,747.8 1085.6,750.9C1087.0,754.1 1088.8,768.4 1090.4,771.7C1092.0,775.0 1093.4,769.5 1095.1,770.8C1096.8,772.1 1099.2,779.0 1100.8,779.3C1102.4,779.6 1103.2,772.7 1104.6,772.4C1106.0,772.0 1107.8,776.3 1109.3,777.1C1110.8,777.9 1111.6,775.5 1113.4,777.1C1115.2,778.7 1118.3,783.0 1120.3,786.6C1122.4,790.1 1124.1,797.0 1125.7,798.2C1127.3,799.4 1128.3,795.5 1129.8,793.8C1131.3,792.1 1133.2,789.2 1134.5,788.1C1135.9,787.1 1136.4,789.9 1137.7,787.5C1139.0,785.1 1140.7,777.6 1142.4,773.9C1144.2,770.3 1146.3,768.6 1148.1,765.4C1149.9,762.3 1152.1,756.6 1153.5,755.0C1154.9,753.4 1155.4,756.2 1156.6,756.0C1157.8,755.7 1158.8,752.3 1160.7,753.4C1162.7,754.6 1166.4,762.1 1168.3,762.9C1170.2,763.7 1171.2,759.0 1172.4,758.2C1173.6,757.4 1174.3,764.0 1175.6,758.2C1176.8,752.4 1178.2,730.6 1179.7,723.5C1181.1,716.4 1182.8,715.8 1184.1,715.6C1185.3,715.3 1185.9,726.9 1187.2,721.9C1188.6,716.9 1190.7,692.6 1192.3,685.6C1193.8,678.7 1195.4,678.7 1196.7,680.3C1197.9,681.8 1198.7,695.8 1199.8,695.1C1200.9,694.4 1202.1,676.7 1203.3,676.2C1204.5,675.6 1205.2,687.5 1207.1,691.9C1209.0,696.4 1213.1,701.8 1215.0,703.0C1216.8,704.2 1217.1,700.9 1218.1,699.2C1219.2,697.5 1220.1,693.3 1221.3,692.9C1222.5,692.5 1223.8,693.9 1225.1,696.7C1226.4,699.4 1228.1,706.6 1229.2,709.3C1230.2,711.9 1230.2,705.3 1231.4,712.4C1232.6,719.5 1234.9,746.6 1236.4,751.9C1238.0,757.1 1239.3,744.0 1240.9,744.0C1242.4,744.0 1244.4,755.5 1245.9,751.9C1247.4,748.2 1248.4,723.6 1249.7,721.9C1250.9,720.2 1252.2,741.7 1253.5,741.5C1254.8,741.2 1256.2,719.3 1257.6,720.3C1258.9,721.4 1260.4,746.9 1261.7,747.8C1263.0,748.7 1264.3,723.9 1265.5,725.7C1266.6,727.4 1267.4,760.0 1268.6,758.2C1269.8,756.4 1271.3,719.2 1272.5,715.0C1273.7,710.7 1274.6,731.1 1275.7,732.9C1276.7,734.7 1277.7,725.4 1278.8,725.7C1280.0,725.9 1281.5,730.8 1282.6,734.5C1283.8,738.2 1284.7,746.8 1285.8,747.8C1286.8,748.7 1287.8,739.0 1288.9,740.2C1290.1,741.4 1291.2,748.7 1292.7,755.0C1294.2,761.3 1296.4,777.4 1297.8,778.0C1299.1,778.7 1299.7,757.2 1300.9,759.1C1302.2,761.1 1303.6,782.8 1305.3,789.7C1307.0,796.7 1309.0,800.5 1311.0,800.8C1313.0,801.0 1315.3,787.4 1317.3,791.3C1319.3,795.2 1321.0,815.5 1323.0,824.4C1325.0,833.4 1327.5,847.4 1329.3,844.9C1331.1,842.5 1332.3,818.0 1333.7,809.6C1335.1,801.2 1336.2,794.6 1337.8,794.4C1339.4,794.3 1341.3,806.4 1343.2,808.6C1345.0,810.9 1346.9,806.4 1348.9,807.7C1350.9,809.0 1353.3,814.1 1355.2,816.5C1357.0,818.9 1358.6,821.4 1359.9,822.2C1361.2,823.0 1361.7,820.1 1363.1,821.3C1364.4,822.4 1366.2,826.3 1367.8,829.1C1369.4,832.0 1370.9,840.7 1372.5,838.6C1374.1,836.5 1375.8,822.6 1377.3,816.5C1378.7,810.5 1379.7,810.7 1381.0,802.3C1382.4,793.9 1383.8,776.6 1385.1,766.1C1386.5,755.5 1387.7,742.8 1389.2,739.2C1390.8,735.7 1392.8,748.3 1394.6,744.6C1396.4,740.9 1397.9,725.2 1400.0,717.2C1402.1,709.2 1404.7,701.4 1407.2,696.7C1409.7,691.9 1412.5,690.8 1415.1,688.8C1417.7,686.8 1420.1,685.7 1423.0,684.7C1425.9,683.6 1429.8,683.6 1432.5,682.5C1435.1,681.3 1436.7,680.2 1438.8,677.7C1440.9,675.3 1443.2,669.6 1445.1,667.6C1446.9,665.6 1448.2,668.3 1449.8,665.7C1451.4,663.2 1453.0,655.6 1454.5,652.5C1456.1,649.3 1457.5,650.4 1459.3,646.8C1461.0,643.2 1463.1,634.7 1465.0,631.0C1466.8,627.4 1468.9,624.8 1470.3,624.7C1471.7,624.6 1472.2,629.2 1473.5,630.4C1474.8,631.6 1476.8,635.6 1478.2,632.0C1479.6,628.4 1480.7,613.4 1482.0,609.0C1483.3,604.5 1484.7,609.4 1486.1,605.2C1487.5,601.0 1488.9,584.5 1490.2,583.7C1491.5,582.9 1492.6,605.4 1494.0,600.4C1495.4,595.5 1497.2,556.9 1498.7,554.1C1500.2,551.3 1501.6,579.3 1502.8,583.7C1504.0,588.1 1504.9,580.3 1506.0,580.6C1507.0,580.9 1507.7,591.9 1509.1,585.6C1510.5,579.3 1512.8,545.2 1514.5,542.7C1516.2,540.2 1517.6,566.5 1519.2,570.5C1520.8,574.5 1522.5,560.4 1523.9,566.7C1525.4,573.0 1527.0,600.8 1528.0,608.3C1529.1,615.9 1529.4,609.7 1530.3,612.1C1531.1,614.5 1532.4,622.6 1533.4,622.5C1534.5,622.4 1535.5,611.6 1536.6,611.5C1537.6,611.3 1538.4,624.8 1539.7,621.6C1541.0,618.3 1542.7,596.0 1544.4,591.9C1546.2,587.9 1548.1,589.7 1550.1,597.3C1552.1,604.9 1554.5,633.5 1556.4,637.4C1558.4,641.2 1560.1,621.5 1561.8,620.3C1563.5,619.2 1565.0,626.4 1566.5,630.4C1568.1,634.5 1569.7,638.9 1571.3,644.6C1572.8,650.3 1574.4,662.2 1576.0,664.5C1577.6,666.7 1578.7,657.5 1580.7,658.2C1582.7,658.8 1586.1,667.2 1588.0,668.3C1589.8,669.3 1591.0,665.1 1591.8,664.5C1592.5,663.8 1591.7,663.6 1592.5,664.5C1593.4,665.4 1595.5,667.0 1596.9,669.8C1598.4,672.7 1599.8,678.9 1601.0,681.5C1602.3,684.1 1603.0,683.7 1604.2,685.6C1605.4,687.5 1606.9,692.0 1608.3,692.9C1609.7,693.8 1611.1,693.0 1612.7,691.0C1614.3,689.0 1616.0,683.0 1617.8,680.9C1619.5,678.8 1621.7,677.8 1623.1,678.4C1624.5,678.9 1624.9,680.5 1626.3,684.0C1627.7,687.6 1630.1,696.4 1631.6,699.8C1633.2,703.2 1634.4,701.9 1635.7,704.5C1637.1,707.2 1638.6,713.8 1639.8,715.6C1641.1,717.3 1641.6,712.8 1643.0,715.0C1644.4,717.1 1646.9,725.7 1648.4,728.2C1649.8,730.7 1650.2,727.3 1651.5,729.8C1652.8,732.3 1654.7,740.7 1656.2,743.3C1657.8,746.0 1659.7,744.7 1661.0,745.6C1662.3,746.4 1663.1,748.3 1664.1,748.7C1665.2,749.1 1666.0,746.9 1667.3,747.8C1668.6,748.7 1670.4,752.9 1672.0,754.1C1673.6,755.3 1674.9,754.2 1676.8,755.0C1678.6,755.9 1681.2,757.4 1683.1,759.1C1684.9,760.9 1686.5,764.2 1687.8,765.4C1689.1,766.7 1689.4,765.4 1690.9,766.7C1692.5,767.9 1694.9,771.3 1697.3,773.0C1699.6,774.7 1702.5,776.2 1705.1,777.1C1707.8,778.0 1711.2,778.5 1713.0,778.7C1714.9,778.8 1715.1,777.8 1716.2,778.0C1717.2,778.3 1718.0,782.5 1719.3,780.3C1720.7,778.0 1722.8,767.6 1724.1,764.5C1725.4,761.3 1725.9,764.0 1727.2,761.3C1728.5,758.7 1730.5,754.0 1732.0,748.7C1733.4,743.4 1734.3,738.5 1735.7,729.8C1737.2,721.1 1739.4,702.4 1740.8,696.7C1742.2,690.9 1742.8,697.2 1743.9,695.1C1745.1,693.0 1746.7,686.5 1747.7,684.0C1748.8,681.6 1749.3,683.7 1750.3,680.3C1751.2,676.8 1752.4,666.0 1753.4,663.5C1754.5,661.1 1755.1,670.7 1756.6,665.7C1758.0,660.7 1760.5,639.3 1761.9,633.6C1763.3,627.8 1763.9,634.8 1765.1,631.0C1766.3,627.3 1768.0,611.0 1769.2,610.9C1770.4,610.7 1771.3,632.5 1772.3,630.4C1773.4,628.3 1774.2,598.1 1775.5,598.2C1776.8,598.3 1778.3,627.2 1779.9,631.0C1781.5,634.9 1783.6,624.8 1785.0,621.6C1786.3,618.3 1786.7,609.7 1788.1,611.5C1789.5,613.2 1792.2,625.2 1793.5,632.0C1794.7,638.8 1794.8,643.0 1795.7,652.5C1796.6,662.0 1797.5,688.5 1798.8,688.8C1800.2,689.0 1802.5,657.0 1803.9,654.1C1805.2,651.2 1806.0,670.5 1807.0,671.4C1808.0,672.3 1808.8,658.8 1809.9,659.4C1810.9,660.1 1812.5,673.3 1813.3,675.2C1814.2,677.1 1813.9,668.5 1814.9,670.8C1816.0,673.0 1818.1,685.1 1819.7,688.8C1821.2,692.5 1822.8,692.6 1824.1,692.9C1825.3,693.1 1826.2,690.2 1827.2,690.3C1828.3,690.5 1828.9,687.2 1830.4,693.5C1831.9,699.8 1834.5,725.8 1836.1,728.2C1837.6,730.6 1838.6,714.5 1839.8,707.7C1841.1,700.9 1842.3,688.8 1843.3,687.2C1844.4,685.6 1845.2,694.3 1846.2,698.2C1847.2,702.2 1847.9,708.4 1849.3,710.9C1850.7,713.3 1853.0,712.9 1854.4,713.1C1855.7,713.2 1856.5,711.6 1857.5,711.8C1858.6,712.0 1859.6,714.0 1860.7,714.0C1861.7,714.0 1862.8,711.6 1863.8,711.8C1864.9,712.0 1865.8,715.1 1867.0,715.0C1868.1,714.8 1869.3,710.7 1870.8,710.9C1872.2,711.0 1874.0,713.7 1875.5,715.6C1877.0,717.4 1878.0,721.6 1879.6,721.9C1881.2,722.2 1883.3,716.9 1885.0,717.2C1886.6,717.4 1888.3,723.1 1889.7,723.5C1891.1,723.8 1892.0,718.3 1893.5,719.4C1894.9,720.4 1896.9,727.5 1898.5,729.8C1900.1,732.0 1901.4,730.3 1902.9,732.9C1904.5,735.6 1906.5,741.1 1908.0,745.6C1909.5,750.0 1910.6,753.8 1911.8,759.7C1912.9,765.7 1913.5,774.8 1914.9,781.2C1916.3,787.6 1918.7,795.2 1920.1,798.2C1921.5,801.2 1922.0,797.6 1923.2,799.2C1924.5,800.8 1925.9,805.8 1927.4,807.7C1928.8,809.6 1930.7,810.9 1932.1,810.9C1933.5,810.9 1934.6,807.2 1935.9,807.7C1937.2,808.2 1938.4,812.3 1940.0,814.0C1941.5,815.7 1944.0,817.7 1945.3,818.1C1946.6,818.5 1946.8,815.8 1947.9,816.5C1948.9,817.2 1950.5,821.7 1951.6,822.2C1952.8,822.7 1953.6,819.6 1954.8,819.7C1956.0,819.8 1957.5,823.1 1958.9,822.8C1960.3,822.6 1961.7,818.4 1963.0,818.1C1964.3,817.8 1965.4,821.6 1966.8,821.3C1968.2,820.9 1969.8,817.6 1971.5,815.9C1973.2,814.2 1975.3,811.4 1976.9,810.9C1978.5,810.3 1979.5,814.2 1981.0,812.7C1982.5,811.3 1983.9,805.8 1985.7,802.3C1987.5,798.9 1990.0,802.1 1992.0,791.9C1994.0,781.8 1995.6,748.0 1997.7,741.5C1999.8,734.9 2002.5,754.6 2004.6,752.8C2006.7,751.0 2008.7,734.7 2010.3,730.7C2011.9,726.7 2012.8,730.0 2014.1,728.8C2015.4,727.6 2016.8,725.2 2017.9,723.5C2018.9,721.8 2019.2,722.6 2020.4,718.7C2021.6,714.9 2023.8,703.6 2025.1,700.4C2026.5,697.3 2027.0,704.6 2028.3,699.8C2029.6,695.0 2031.6,675.4 2033.0,671.4C2034.4,667.5 2035.3,678.9 2036.8,676.2C2038.3,673.4 2040.5,658.3 2041.9,655.0C2043.2,651.7 2043.9,656.4 2045.0,656.3C2046.2,656.1 2047.2,656.7 2048.8,654.1C2050.4,651.4 2052.6,640.8 2054.5,640.5C2056.3,640.2 2058.2,655.0 2059.8,652.5C2061.5,650.0 2063.2,621.6 2064.6,625.7C2066.0,629.8 2067.0,678.0 2068.4,677.1C2069.7,676.2 2070.9,622.1 2072.5,620.3C2074.0,618.6 2076.1,664.2 2077.8,666.7C2079.6,669.2 2081.4,634.1 2082.9,635.1C2084.3,636.2 2085.5,669.3 2086.7,673.0C2087.8,676.7 2088.7,650.9 2089.8,657.2C2091.0,663.5 2092.4,701.2 2093.6,710.9C2094.8,720.5 2095.5,711.4 2096.8,715.0C2098.0,718.5 2099.4,734.9 2100.9,732.0C2102.3,729.0 2104.0,705.0 2105.6,697.3C2107.2,689.6 2109.0,685.6 2110.3,685.6C2111.6,685.6 2112.4,696.6 2113.5,697.3C2114.5,698.0 2115.6,687.7 2116.6,689.7C2117.7,691.7 2118.6,707.5 2119.8,709.3C2121.0,711.1 2122.3,699.8 2123.9,700.4C2125.5,701.1 2127.5,705.7 2129.2,713.1C2131.0,720.4 2132.9,734.1 2134.6,744.6C2136.3,755.1 2138.2,770.5 2139.7,776.2C2141.1,781.8 2141.5,778.7 2143.4,778.7C2145.4,778.7 2149.3,777.7 2151.3,776.2C2153.3,774.6 2154.0,768.4 2155.4,769.2C2156.8,770.1 2158.3,779.4 2159.8,781.2C2161.4,783.0 2163.3,779.7 2164.9,780.3C2166.5,780.8 2167.9,783.6 2169.3,784.4C2170.7,785.1 2171.9,785.7 2173.4,785.0C2174.9,784.3 2176.3,780.8 2178.1,780.3C2180.0,779.7 2182.6,781.1 2184.4,781.8C2186.3,782.5 2187.6,783.7 2189.2,784.4C2190.8,785.0 2192.3,783.8 2193.9,785.6C2195.5,787.4 2197.0,792.1 2198.6,795.1C2200.3,798.0 2202.3,798.4 2204.0,803.3C2205.7,808.2 2207.3,820.2 2209.1,824.4C2210.8,828.6 2212.5,827.5 2214.4,828.5C2216.4,829.6 2218.4,829.6 2220.7,830.7C2223.1,831.9 2226.1,834.1 2228.6,835.5C2231.1,836.8 2232.3,838.3 2235.7,838.6C2239.1,838.9 2244.6,838.3 2248.9,837.0C2253.2,835.7 2258.7,833.4 2261.5,830.7C2264.4,828.1 2264.8,826.9 2266.3,821.3C2267.7,815.6 2269.1,800.3 2270.4,797.0C2271.7,793.7 2272.7,803.0 2274.2,801.4C2275.6,799.8 2277.6,789.1 2278.9,787.5C2280.2,785.9 2280.5,793.0 2282.1,791.9C2283.6,790.9 2286.5,786.6 2288.4,781.2C2290.2,775.8 2291.8,765.7 2293.1,759.7C2294.4,753.8 2294.8,752.9 2296.2,745.6C2297.7,738.2 2300.3,720.2 2301.9,715.6C2303.5,711.0 2304.1,719.3 2305.7,718.1C2307.3,717.0 2309.8,712.8 2311.4,708.6C2313.0,704.4 2314.0,696.2 2315.2,692.9C2316.3,689.6 2316.6,692.3 2318.3,688.8C2320.0,685.2 2323.4,673.2 2325.3,671.4C2327.1,669.7 2327.8,680.6 2329.4,678.4C2330.9,676.2 2333.3,661.2 2334.7,658.2C2336.2,655.2 2336.8,654.0 2337.9,660.4C2338.9,666.8 2340.1,692.8 2341.0,696.7C2342.0,700.5 2342.6,681.6 2343.6,683.4C2344.5,685.2 2345.6,710.6 2346.7,707.7C2347.9,704.8 2349.2,664.0 2350.5,665.7C2351.8,667.5 2353.1,716.4 2354.6,718.1C2356.1,719.8 2357.8,676.3 2359.3,676.2C2360.9,676.0 2362.9,710.9 2364.1,717.2C2365.2,723.5 2365.4,712.8 2366.3,714.0C2367.2,715.2 2368.2,729.3 2369.4,724.4C2370.6,719.5 2372.1,686.6 2373.5,684.7C2375.0,682.8 2376.3,703.1 2378.3,713.1C2380.2,723.0 2383.4,733.6 2385.2,744.6C2387.0,755.6 2388.1,775.6 2389.3,779.3C2390.5,783.0 2391.3,767.2 2392.5,766.7C2393.7,766.2 2395.0,777.4 2396.6,776.2C2398.1,774.9 2400.3,759.5 2401.9,759.1C2403.5,758.7 2405.0,771.8 2406.0,773.9C2407.1,776.0 2407.2,770.5 2408.2,771.7C2409.2,772.9 2410.7,789.5 2412.0,781.2C2413.3,772.9 2414.4,735.4 2416.1,721.9C2417.9,708.4 2420.4,703.7 2422.4,700.4C2424.4,697.2 2426.3,701.4 2428.1,702.3C2429.9,703.3 2432.1,705.9 2433.5,706.1C2434.9,706.3 2435.4,698.3 2436.6,703.6C2437.8,708.9 2439.8,723.0 2440.7,737.7C2441.6,752.3 2441.4,780.5 2442.0,791.3C2442.6,802.1 2443.0,799.2 2444.5,802.3C2446.0,805.5 2449.1,808.1 2450.8,810.2C2452.5,812.3 2453.4,814.4 2454.6,815.0C2455.8,815.5 2456.4,812.1 2457.8,813.4C2459.1,814.7 2460.8,821.2 2462.8,822.8C2464.8,824.5 2467.8,823.7 2469.7,823.5C2471.7,823.2 2472.6,820.9 2474.5,821.3C2476.3,821.6 2478.7,823.1 2480.8,825.4C2482.9,827.6 2485.3,832.9 2487.1,834.8C2488.9,836.8 2490.1,836.7 2491.8,837.0C2493.6,837.4 2495.7,835.2 2497.5,837.0C2499.3,838.9 2501.5,846.7 2502.9,848.1C2504.3,849.5 2504.2,843.7 2506.0,845.6C2507.9,847.4 2511.5,856.3 2513.9,859.1C2516.3,861.9 2517.9,861.2 2520.2,862.3C2522.6,863.3 2526.0,864.4 2528.1,865.4C2530.2,866.5 2531.4,867.3 2532.8,868.6C2534.3,869.9 2535.0,879.8 2536.6,873.3C2538.2,866.8 2541.4,837.0 2542.3,829.8" fill="none" stroke="#0a8a45" stroke-width="1.5" stroke-linejoin="round"/><circle cx="2235.3" cy="455.1" r="4.3" fill="#3f51a6"/><circle cx="2235.4" cy="838.9" r="4.5" fill="#0a8a45"/></svg>
<div class="a" style="left:2240.7px;top:438.5px;width:83.2px;height:23.2px;background:#3f51a6;border-radius:3px"></div>
<div class="t" style="left:2243.5px;top:442.5px;font-size:15px;color:#fff;transform:scaleX(1.1122);transform-origin:0 0;">66.514 psi</div>
<div class="a" style="left:2240.8px;top:821.8px;width:83.2px;height:23.6px;background:#0a8a45;border-radius:3px"></div>
<div class="t" style="left:2243.5px;top:825.9px;font-size:15px;color:#fff;transform:scaleX(1.1122);transform-origin:0 0;">67.514 psi</div>
<div class="t" style="left:2448.5px;top:133.0px;font-size:16px;color:#4d5fa8;transform:scaleX(0.9614);transform-origin:0 0;">Press (psi)</div>
<div class="t" style="left:2346.5px;top:523.0px;font-size:16px;color:#2c8a57;transform:scaleX(0.9676);transform-origin:0 0;">Press LowPassFilter (psi)</div>
<div class="t" style="left:615.3px;top:193.3px;font-size:14px;color:#4d5fa8;transform:scaleX(1.0078);transform-origin:0 0;">80</div>
<div class="t" style="left:615.3px;top:288.3px;font-size:14px;color:#4d5fa8;transform:scaleX(1.0078);transform-origin:0 0;">75</div>
<div class="t" style="left:615.3px;top:382.8px;font-size:14px;color:#4d5fa8;transform:scaleX(1.0078);transform-origin:0 0;">70</div>
<div class="t" style="left:615.3px;top:477.3px;font-size:14px;color:#4d5fa8;transform:scaleX(1.0078);transform-origin:0 0;">65</div>
<div class="t" style="left:615.3px;top:518.3px;font-size:14px;color:#2a8a55;transform:scaleX(1.0078);transform-origin:0 0;">82</div>
<div class="t" style="left:615.3px;top:561.6px;font-size:14px;color:#2a8a55;transform:scaleX(1.0078);transform-origin:0 0;">80</div>
<div class="t" style="left:615.3px;top:604.9px;font-size:14px;color:#2a8a55;transform:scaleX(1.0078);transform-origin:0 0;">78</div>
<div class="t" style="left:615.3px;top:648.2px;font-size:14px;color:#2a8a55;transform:scaleX(1.0078);transform-origin:0 0;">76</div>
<div class="t" style="left:615.3px;top:691.4px;font-size:14px;color:#2a8a55;transform:scaleX(1.0078);transform-origin:0 0;">74</div>
<div class="t" style="left:615.3px;top:734.7px;font-size:14px;color:#2a8a55;transform:scaleX(1.0078);transform-origin:0 0;">72</div>
<div class="t" style="left:615.3px;top:778.0px;font-size:14px;color:#2a8a55;transform:scaleX(1.0078);transform-origin:0 0;">70</div>
<div class="t" style="left:615.3px;top:821.2px;font-size:14px;color:#2a8a55;transform:scaleX(1.0078);transform-origin:0 0;">68</div>
<div class="t" style="left:615.3px;top:864.5px;font-size:14px;color:#2a8a55;transform:scaleX(1.0078);transform-origin:0 0;">66</div>
<div class="t" style="left:733.8px;top:909.2px;font-size:14.5px;color:#666;transform:scaleX(1.0097);transform-origin:0 0;">Nov 21</div>
<div class="t" style="left:862.8px;top:909.2px;font-size:14.5px;color:#666;">12:00 pm</div>
<div class="t" style="left:1005.9px;top:909.2px;font-size:14.5px;color:#666;transform:scaleX(1.0097);transform-origin:0 0;">Nov 22</div>
<div class="t" style="left:1134.9px;top:909.2px;font-size:14.5px;color:#666;">12:00 pm</div>
<div class="t" style="left:1278.0px;top:909.2px;font-size:14.5px;color:#666;transform:scaleX(1.0097);transform-origin:0 0;">Nov 23</div>
<div class="t" style="left:1407.0px;top:909.2px;font-size:14.5px;color:#666;">12:00 pm</div>
<div class="t" style="left:1550.0px;top:909.2px;font-size:14.5px;color:#666;transform:scaleX(1.0097);transform-origin:0 0;">Nov 24</div>
<div class="t" style="left:1679.1px;top:909.2px;font-size:14.5px;color:#666;">12:00 pm</div>
<div class="t" style="left:1822.1px;top:909.2px;font-size:14.5px;color:#666;transform:scaleX(1.0097);transform-origin:0 0;">Nov 25</div>
<div class="t" style="left:1951.2px;top:909.2px;font-size:14.5px;color:#666;">12:00 pm</div>
<div class="t" style="left:2094.2px;top:909.2px;font-size:14.5px;color:#666;transform:scaleX(1.0097);transform-origin:0 0;">Nov 26</div>
<div class="t" style="left:2223.2px;top:909.2px;font-size:14.5px;color:#666;">12:00 pm</div>
<div class="t" style="left:2366.3px;top:909.2px;font-size:14.5px;color:#666;transform:scaleX(1.0097);transform-origin:0 0;">Nov 27</div>
<div class="t" style="left:2481.1px;top:909.2px;font-size:14.5px;color:#666;">12:00 pm</div>
<div class="a" style="left:2139.2px;top:885.5px;width:193.5px;height:21.2px;background:#e9f1f2;border:1px solid #c8cfd2;border-radius:3px"></div>
<div class="t" style="left:2143.0px;top:888.5px;font-size:15px;color:#127d6a;letter-spacing:1px;transform:scaleX(1.0143);transform-origin:0 0;">11/26/2018 10:25:54 AM</div>
<svg class="a" style="left:624px;top:932px" width="13" height="19" viewBox="0 0 13 19"><path d="M6.5,0.5 V12" stroke="#007960" stroke-width="2.8"/><path d="M0.3,10.5 H12.7 L6.5,18.5 Z" fill="#007960"/></svg>
<div class="t" style="left:647.4px;top:933.7px;font-size:15px;color:#127d6a;transform:scaleX(0.8866);transform-origin:0 0;">11/20/2018 1:27 PM </div>
<div class="t" style="left:770.5px;top:933.7px;font-size:15px;color:#127d6a;transform:scaleX(0.8051);transform-origin:0 0;text-decoration:underline;text-decoration-color:#7fbcae;">EST</div>
<div class="t" style="left:2394.0px;top:933.7px;font-size:15px;color:#127d6a;transform:scaleX(0.8866);transform-origin:0 0;">11/27/2018 1:27 PM </div>
<div class="t" style="left:2517.2px;top:933.7px;font-size:15px;color:#127d6a;transform:scaleX(0.8051);transform-origin:0 0;text-decoration:underline;text-decoration-color:#7fbcae;">EST</div>
<svg class="a" style="left:1436px;top:931px" width="240" height="20" viewBox="0 0 240 20"><path d="M4,9.5 L12,2 V17 Z M12,9.5 L20,2 V17 Z" fill="#007960"/><path d="M40,9.5 L50,2 V17 Z" fill="#007960"/><path d="M124,2 L134,9.5 L124,17 Z" fill="#007960"/><path d="M153,2 L162,9.5 L153,17 Z M162,2 L171,9.5 L162,17 Z" fill="#007960"/><path d="M188,2 L197,9.5 L188,17 Z" fill="#007960"/><rect x="197.5" y="2" width="2.5" height="15.5" fill="#007960"/><path d="M233,6.5 A6,6 0 0 0 221.5,7.5 M221,12.5 A6,6 0 0 0 232.5,11.5" fill="none" stroke="#007960" stroke-width="2"/><path d="M234,3 V8 H229 Z M220,16 V11 H225 Z" fill="#007960"/></svg>
<div class="t" style="left:1503.0px;top:933.7px;font-size:15px;color:#127d6a;transform:scaleX(0.8823);transform-origin:0 0;">7 days</div>
<div class="a" style="left:614px;top:957.5px;width:1946px;height:81px;background:#f5f5f5"></div>
<div class="a" style="left:645.4px;top:967.8px;width:1867px;height:16px;background:#f3f3f3;border:2px solid #cccccc;border-radius:4px"></div>
<div class="t" style="left:700.6px;top:989.7px;font-size:13px;color:#9a9a9a;transform:scaleX(0.8832);transform-origin:0 0;">Nov 9</div>
<div class="t" style="left:805.0px;top:989.7px;font-size:13px;color:#9a9a9a;transform:scaleX(0.8575);transform-origin:0 0;">Nov 11</div>
<div class="t" style="left:911.5px;top:989.7px;font-size:13px;color:#9a9a9a;transform:scaleX(0.8373);transform-origin:0 0;">Nov 13</div>
<div class="t" style="left:1018.2px;top:989.7px;font-size:13px;color:#9a9a9a;transform:scaleX(0.8373);transform-origin:0 0;">Nov 15</div>
<div class="t" style="left:1124.8px;top:989.7px;font-size:13px;color:#9a9a9a;transform:scaleX(0.8373);transform-origin:0 0;">Nov 17</div>
<div class="t" style="left:1231.3px;top:989.7px;font-size:13px;color:#9a9a9a;transform:scaleX(0.8373);transform-origin:0 0;">Nov 19</div>
<div class="t" style="left:1337.9px;top:989.7px;font-size:13px;color:#9a9a9a;transform:scaleX(0.8373);transform-origin:0 0;">Nov 21</div>
<div class="t" style="left:1444.5px;top:989.7px;font-size:13px;color:#9a9a9a;transform:scaleX(0.8373);transform-origin:0 0;">Nov 23</div>
<div class="t" style="left:1551.2px;top:989.7px;font-size:13px;color:#9a9a9a;transform:scaleX(0.8373);transform-origin:0 0;">Nov 25</div>
<div class="t" style="left:1657.8px;top:989.7px;font-size:13px;color:#9a9a9a;transform:scaleX(0.8373);transform-origin:0 0;">Nov 27</div>
<div class="t" style="left:1764.3px;top:989.7px;font-size:13px;color:#9a9a9a;transform:scaleX(0.8373);transform-origin:0 0;">Nov 29</div>
<div class="t" style="left:1869.7px;top:989.7px;font-size:13px;color:#9a9a9a;transform:scaleX(0.8472);transform-origin:0 0;">Dec '18</div>
<div class="t" style="left:1979.8px;top:989.7px;font-size:13px;color:#9a9a9a;transform:scaleX(0.8832);transform-origin:0 0;">Dec 3</div>
<div class="t" style="left:2086.4px;top:989.7px;font-size:13px;color:#9a9a9a;transform:scaleX(0.8832);transform-origin:0 0;">Dec 5</div>
<div class="t" style="left:2193.0px;top:989.7px;font-size:13px;color:#9a9a9a;transform:scaleX(0.8832);transform-origin:0 0;">Dec 7</div>
<div class="t" style="left:2299.6px;top:989.7px;font-size:13px;color:#9a9a9a;transform:scaleX(0.8832);transform-origin:0 0;">Dec 9</div>
<div class="t" style="left:2403.9px;top:989.7px;font-size:13px;color:#9a9a9a;transform:scaleX(0.8575);transform-origin:0 0;">Dec 11</div>
<div class="a" style="left:715.1px;top:984px;width:1px;height:4.5px;background:#bbb"></div>
<div class="a" style="left:821.7px;top:984px;width:1px;height:4.5px;background:#bbb"></div>
<div class="a" style="left:928.3px;top:984px;width:1px;height:4.5px;background:#bbb"></div>
<div class="a" style="left:1034.9px;top:984px;width:1px;height:4.5px;background:#bbb"></div>
<div class="a" style="left:1141.5px;top:984px;width:1px;height:4.5px;background:#bbb"></div>
<div class="a" style="left:1248.1px;top:984px;width:1px;height:4.5px;background:#bbb"></div>
<div class="a" style="left:1354.7px;top:984px;width:1px;height:4.5px;background:#bbb"></div>
<div class="a" style="left:1461.3px;top:984px;width:1px;height:4.5px;background:#bbb"></div>
<div class="a" style="left:1567.9px;top:984px;width:1px;height:4.5px;background:#bbb"></div>
<div class="a" style="left:1674.5px;top:984px;width:1px;height:4.5px;background:#bbb"></div>
<div class="a" style="left:1781.1px;top:984px;width:1px;height:4.5px;background:#bbb"></div>
<div class="a" style="left:1887.7px;top:984px;width:1px;height:4.5px;background:#bbb"></div>
<div class="a" style="left:1994.3px;top:984px;width:1px;height:4.5px;background:#bbb"></div>
<div class="a" style="left:2100.9px;top:984px;width:1px;height:4.5px;background:#bbb"></div>
<div class="a" style="left:2207.5px;top:984px;width:1px;height:4.5px;background:#bbb"></div>
<div class="a" style="left:2314.1px;top:984px;width:1px;height:4.5px;background:#bbb"></div>
<div class="a" style="left:2420.7px;top:984px;width:1px;height:4.5px;background:#bbb"></div>
<div class="a" style="left:1328px;top:965px;width:379px;height:22px;background:#fff;border:2.8px solid #007960"></div>
<div class="a" style="left:1326.4px;top:963.8px;width:6px;height:23.8px;background:#fff;border:2px solid #007960;border-radius:1px"></div>
<div class="a" style="left:1702.8px;top:963.8px;width:6px;height:23.8px;background:#fff;border:2px solid #007960;border-radius:1px"></div>
<svg class="a" style="left:2523.5px;top:968px" width="17" height="19" viewBox="0 0 17 19"><rect x="0.5" y="0.5" width="16" height="18" fill="#007960"/><path d="M1.5,11 L3.5,2 L6,16 L8.5,3 L11,16 L13.5,2 L15.5,12" fill="none" stroke="#f5f5f5" stroke-width="1.6"/></svg>
<svg class="a" style="left:624px;top:1012.5px" width="13" height="19" viewBox="0 0 13 19"><path d="M6.5,7 V18.5" stroke="#007960" stroke-width="2.8"/><path d="M0.3,8.5 H12.7 L6.5,0.5 Z" fill="#007960"/></svg>
<div class="t" style="left:647.4px;top:1017.9px;font-size:15px;color:#127d6a;transform:scaleX(0.9295);transform-origin:0 0;">11/7/2018</div>
<div class="t" style="left:1557.0px;top:1017.9px;font-size:15px;color:#127d6a;transform:scaleX(0.9297);transform-origin:0 0;">1.2 months</div>
<div class="t" style="left:2469.5px;top:1017.9px;font-size:15px;color:#127d6a;transform:scaleX(0.9057);transform-origin:0 0;">12/12/2018</div>
<div class="a" style="left:614px;top:1038px;width:1946px;height:32.5px;background:#007960"></div>
<svg class="a" style="left:626px;top:1046px" width="20" height="16" viewBox="0 0 20 16"><path d="M1,0 V15 H19.5" fill="none" stroke="#fff" stroke-width="1.8"/><path d="M2.5,13.5 V6 L6,2.5 L10,7 L13,4 L17.5,8.5 V13.5 Z" fill="#fff"/></svg>
<div class="t" style="left:648.5px;top:1047.0px;font-size:16px;color:#fff;transform:scaleX(0.9304);transform-origin:0 0;">Details</div>
<div class="a" style="left:2458px;top:1041.7px;width:94.5px;height:26px;background:#fff;border-radius:4px"></div>
<svg class="a" style="left:2465px;top:1047px" width="17" height="16" viewBox="0 0 17 16"><circle cx="6" cy="9.5" r="4" fill="none" stroke="#333" stroke-width="3" stroke-dasharray="2 1.2"/><circle cx="6" cy="9.5" r="3.6" fill="none" stroke="#333" stroke-width="2"/><circle cx="13" cy="4" r="2.6" fill="none" stroke="#333" stroke-width="1.5"/><circle cx="13" cy="12.5" r="2.3" fill="none" stroke="#333" stroke-width="1.4"/></svg>
<div class="t" style="left:2485.0px;top:1048.1px;font-size:14px;color:#333;transform:scaleX(0.9147);transform-origin:0 0;">Customize</div>
<div class="a" style="left:614px;top:1101.5px;width:1946px;height:2px;background:#dedede"></div>
<div class="a" style="left:614px;top:1103.5px;width:1946px;height:28px;background:#f9f9f9"></div>
<div class="a" style="left:614px;top:1131.3px;width:1946px;height:1.3px;background:#e2e2e2"></div>
<svg class="a" style="left:707px;top:1082px" width="13" height="13" viewBox="0 0 13 13"><path d="M2,2 L11,11 M11,2 L2,11" stroke="#777" stroke-width="3"/></svg>
<div class="a" style="left:733px;top:1082px;width:12px;height:13px;border:1.4px solid #555;border-radius:2px"></div>
<svg class="a" style="left:792.5px;top:1081.5px" width="11" height="15" viewBox="0 0 11 15"><path d="M1,6 L5.5,1 L10,6 Z M1,9 L5.5,14 L10,9 Z" fill="#888"/></svg>
<div class="t" style="left:816.0px;top:1081.0px;font-size:16px;color:#222;transform:scaleX(0.9370);transform-origin:0 0;">Name</div>
<svg class="a" style="left:865.5px;top:1081.5px" width="11" height="15" viewBox="0 0 11 15"><path d="M1,6 L5.5,1 L10,6 Z M1,9 L5.5,14 L10,9 Z" fill="#888"/></svg>
<div class="t" style="left:2333.5px;top:1081.0px;font-size:16px;color:#222;transform:scaleX(0.9060);transform-origin:0 0;">Assets</div>
<div class="t" style="left:2394.0px;top:1081.0px;font-size:16px;color:#127d6a;transform:scaleX(0.9412);transform-origin:0 0;">Lane</div>
<svg class="a" style="left:2436px;top:1080px" width="11" height="7" viewBox="0 0 11 7"><path d="M0.5,6.5 L5.5,1 L10.5,6.5 Z" fill="#127d6a"/></svg>
<svg class="a" style="left:2529px;top:1076px" width="20" height="19" viewBox="0 0 20 19"><path d="M1,1 H13 V13 H1 Z M1,5 H13 M1,9 H13 M5,1 V13 M9,1 V13" fill="none" stroke="#333" stroke-width="1.1"/><circle cx="14.5" cy="13.5" r="4.6" fill="#fff" stroke="#333" stroke-width="1.6"/><path d="M14.5,11 V16 M12,13.5 H17" stroke="#333" stroke-width="1.6"/></svg>
<svg class="a" style="left:618px;top:1109px" width="18" height="16" viewBox="0 0 18 16"><rect x="1.5" y="2.5" width="12" height="12" rx="2" fill="none" stroke="#007960" stroke-width="1.4" stroke-opacity="0.65"/><path d="M5.5,11.5 L6.5,8.5 L14,1 L16.5,3.5 L9,11 Z" fill="#007960"/><path d="M6.5,8.5 L9,11" stroke="#f9f9f9" stroke-width="0.8"/></svg>
<svg class="a" style="left:651px;top:1109px" width="17" height="17" viewBox="0 0 17 17"><path d="M16,1 C11,1 7.5,3.5 5,7.5 L2.5,7.5 L0.5,10 L4,10.5 L6.5,13 L7,16.5 L9.5,14.5 V12 C13.5,9.5 16,6 16,1 Z" fill="#007960"/><circle cx="12.3" cy="4.8" r="0.9" fill="#f9f9f9"/></svg>
<svg class="a" style="left:682.5px;top:1110px" width="15" height="15" viewBox="0 0 15 15"><circle cx="7.5" cy="7.5" r="7" fill="#007960"/><circle cx="7.5" cy="3.7" r="1.3" fill="#fff"/><path d="M5.5,6 H8.5 V11 H10 V12.3 H5.3 V11 H6.6 V7.3 H5.5 Z" fill="#fff"/></svg>
<svg class="a" style="left:707px;top:1111px" width="13" height="13" viewBox="0 0 13 13"><path d="M2,2 L11,11 M11,2 L2,11" stroke="#007960" stroke-width="3"/></svg>
<div class="a" style="left:733px;top:1111px;width:12px;height:13px;border:1.4px solid #555;border-radius:2px"></div>
<svg class="a" style="left:760px;top:1107.5px" width="19" height="17" viewBox="0 0 19 17"><path d="M1,12 L3.5,1.5 L7,13 L9.5,5 L12.5,14 L15,9.5 L18,15.5" fill="none" stroke="#3f51a6" stroke-width="1.8"/></svg>
<div class="t" style="left:788.0px;top:1109.5px;font-size:16px;color:#333;transform:scaleX(0.9534);transform-origin:0 0;">psi</div>
<div class="t" style="left:816.0px;top:1109.5px;font-size:16px;color:#222;transform:scaleX(0.9167);transform-origin:0 0;">Press</div>
<div class="t" style="left:2333.5px;top:1109.5px;font-size:16px;color:#127d6a;transform:scaleX(0.9340);transform-origin:0 0;text-decoration:underline;text-decoration-color:#6fb3a3;">Pump 1</div>
<div class="t" style="left:2436.0px;top:1110.3px;font-size:15px;color:#222;transform:scaleX(0.9588);transform-origin:0 0;">1</div>
<svg class="a" style="left:618px;top:1137px" width="18" height="16" viewBox="0 0 18 16"><rect x="1.5" y="2.5" width="12" height="12" rx="2" fill="none" stroke="#007960" stroke-width="1.4" stroke-opacity="0.65"/><path d="M5.5,11.5 L6.5,8.5 L14,1 L16.5,3.5 L9,11 Z" fill="#007960"/><path d="M6.5,8.5 L9,11" stroke="#f9f9f9" stroke-width="0.8"/></svg>
<svg class="a" style="left:651px;top:1137px" width="17" height="17" viewBox="0 0 17 17"><path d="M16,1 C11,1 7.5,3.5 5,7.5 L2.5,7.5 L0.5,10 L4,10.5 L6.5,13 L7,16.5 L9.5,14.5 V12 C13.5,9.5 16,6 16,1 Z" fill="#007960"/><circle cx="12.3" cy="4.8" r="0.9" fill="#f9f9f9"/></svg>
<svg class="a" style="left:682.5px;top:1138px" width="15" height="15" viewBox="0 0 15 15"><circle cx="7.5" cy="7.5" r="7" fill="#007960"/><circle cx="7.5" cy="3.7" r="1.3" fill="#fff"/><path d="M5.5,6 H8.5 V11 H10 V12.3 H5.3 V11 H6.6 V7.3 H5.5 Z" fill="#fff"/></svg>
<svg class="a" style="left:707px;top:1139px" width="13" height="13" viewBox="0 0 13 13"><path d="M2,2 L11,11 M11,2 L2,11" stroke="#007960" stroke-width="3"/></svg>
<div class="a" style="left:733px;top:1139px;width:12px;height:13px;border:1.4px solid #555;border-radius:2px"></div>
<svg class="a" style="left:760px;top:1135.5px" width="19" height="17" viewBox="0 0 19 17"><path d="M1,12 L3.5,1.5 L7,13 L9.5,5 L12.5,14 L15,9.5 L18,15.5" fill="none" stroke="#0a8a45" stroke-width="1.8"/></svg>
<div class="t" style="left:788.0px;top:1137.5px;font-size:16px;color:#333;transform:scaleX(0.9534);transform-origin:0 0;">psi</div>
<div class="t" style="left:816.0px;top:1137.5px;font-size:16px;color:#222;transform:scaleX(0.9463);transform-origin:0 0;">Press LowPassFilter</div>
<div class="t" style="left:2333.5px;top:1137.5px;font-size:16px;color:#127d6a;transform:scaleX(0.9340);transform-origin:0 0;text-decoration:underline;text-decoration-color:#6fb3a3;">Pump 1</div>
<div class="t" style="left:2436.0px;top:1138.3px;font-size:15px;color:#222;transform:scaleX(0.9588);transform-origin:0 0;">2</div>
</body></html>
